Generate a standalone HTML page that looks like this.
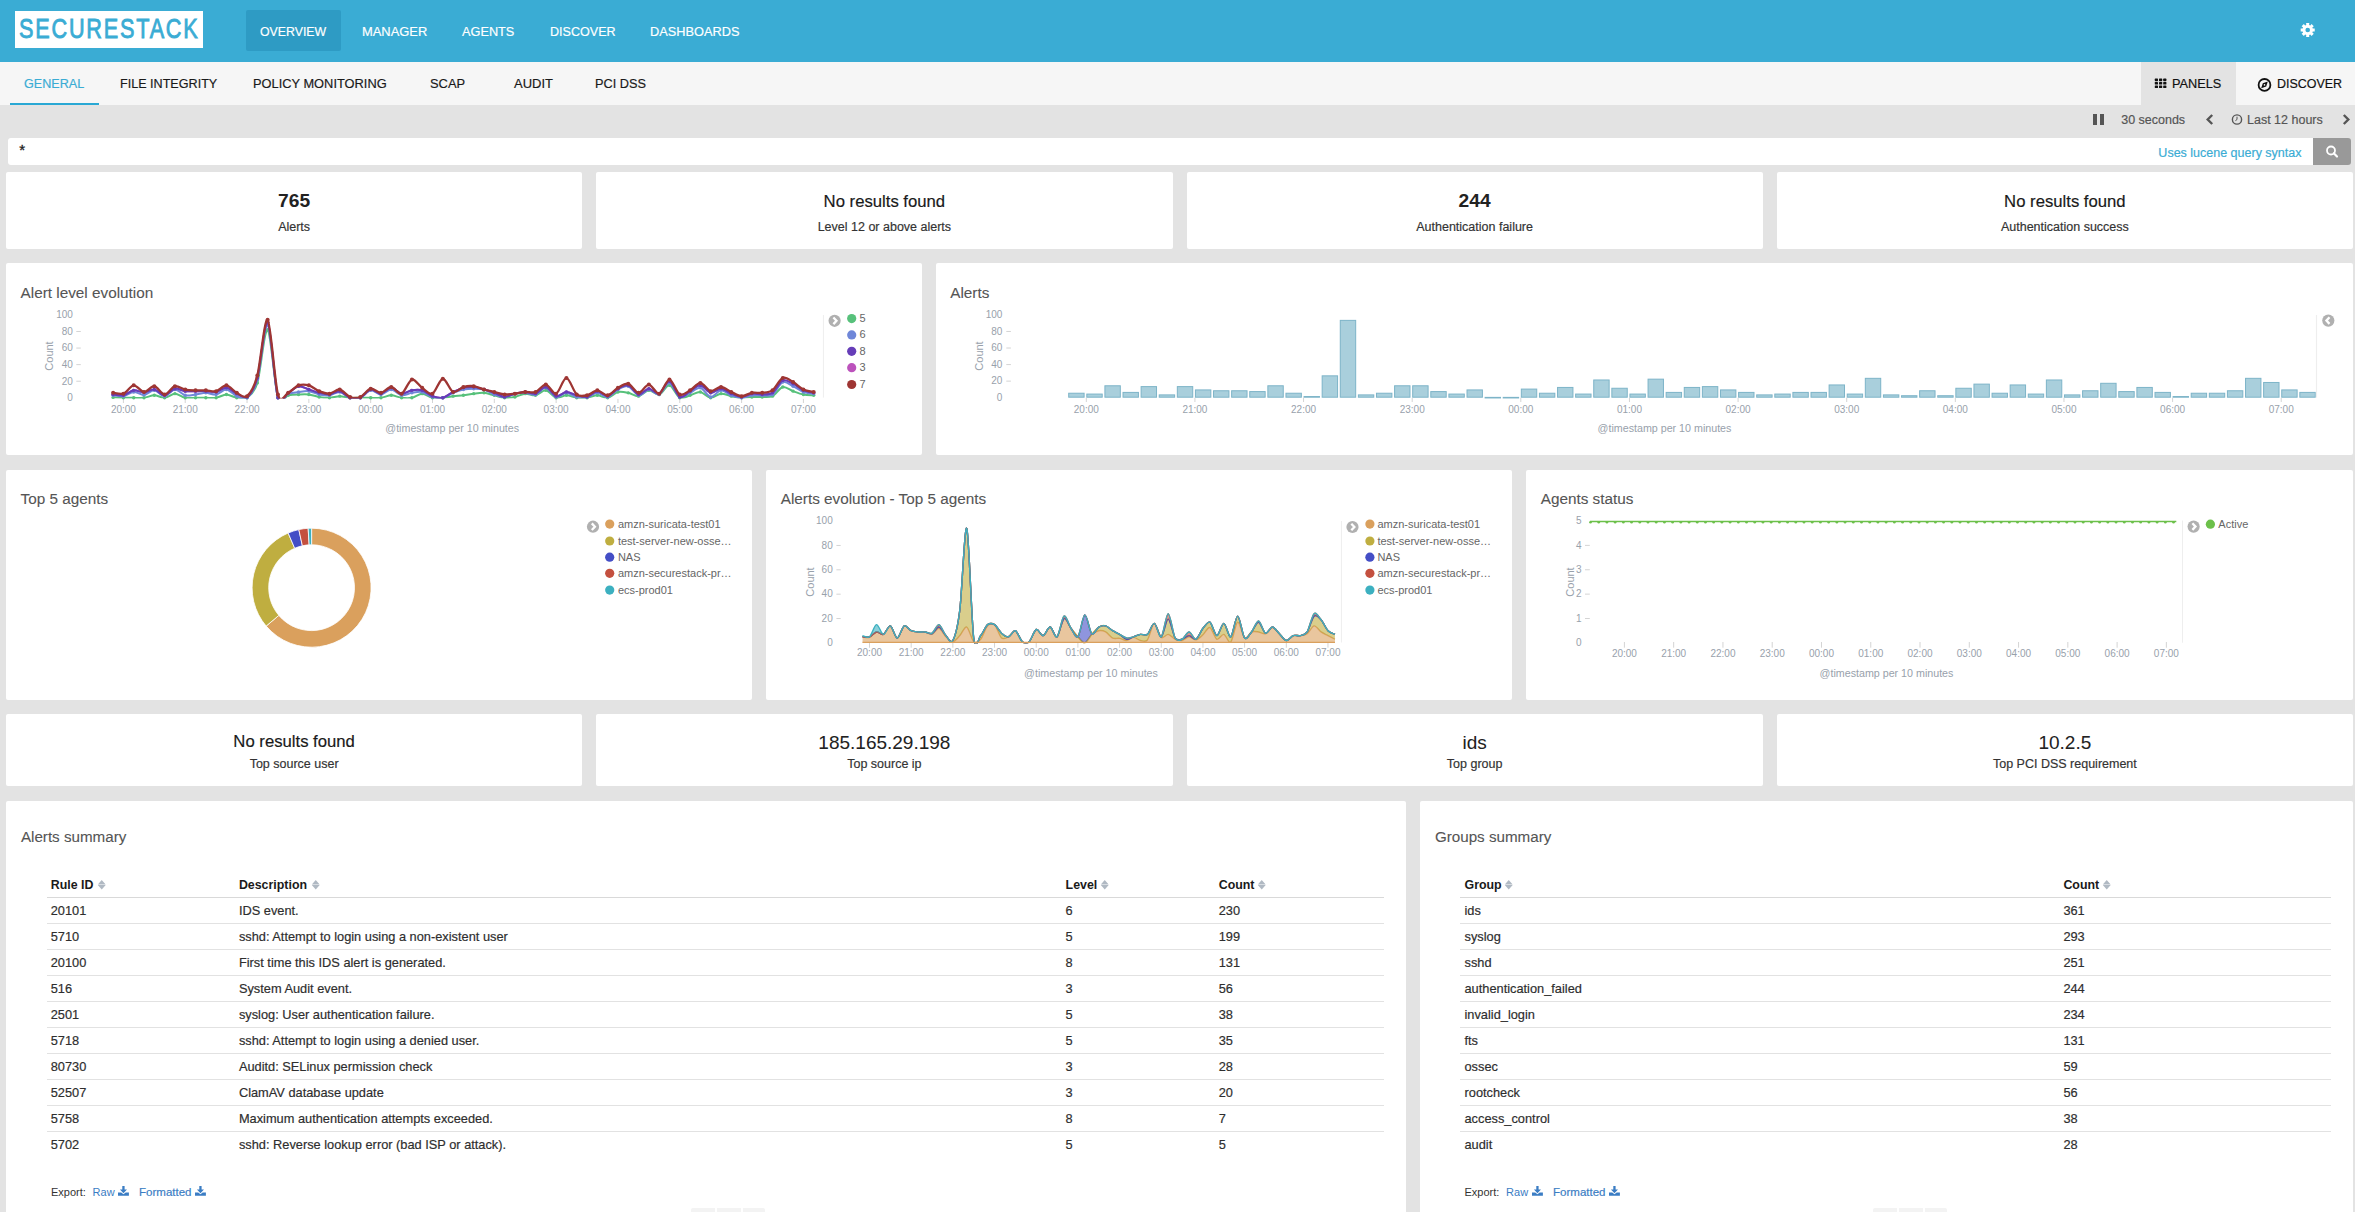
<!DOCTYPE html>
<html><head><meta charset="utf-8"><title>Overview</title><style>
html,body{margin:0;padding:0}
body{width:2355px;height:1212px;overflow:hidden;background:#e3e3e3;position:relative;font-family:"Liberation Sans",sans-serif}
.t{position:absolute;white-space:nowrap;line-height:1;-webkit-text-stroke:0.18px currentColor}
.r{position:absolute}
svg.r{overflow:visible}
</style></head>
<body>
<div class="r" style="left:0.00px;top:0.00px;width:2355.00px;height:62.00px;background:#3aacd4;"></div>
<div class="r" style="left:15.00px;top:11.00px;width:188.00px;height:37.00px;background:#fff;"></div>
<div class="t" style="left:19px;top:14.1px;font-size:28.5px;color:#3aacd4;transform-origin:0 0;transform:scaleX(0.76);letter-spacing:2.35px;-webkit-text-stroke:0.9px #3aacd4">SECURESTACK</div>
<div class="r" style="left:246.00px;top:10.00px;width:95.00px;height:41.00px;background:#2e9bc4;border-radius:2px"></div>
<div class="t" style="left:260.08px;top:25.25px;font-size:13px;color:#fff;transform-origin:0 0;transform:scaleX(0.9480)">OVERVIEW</div>
<div class="t" style="left:361.85px;top:25.25px;font-size:13px;color:#fff;transform-origin:0 0;transform:scaleX(0.9928)">MANAGER</div>
<div class="t" style="left:461.96px;top:25.25px;font-size:13px;color:#fff;transform-origin:0 0;transform:scaleX(0.9790)">AGENTS</div>
<div class="t" style="left:549.57px;top:25.25px;font-size:13px;color:#fff;transform-origin:0 0;transform:scaleX(0.9665)">DISCOVER</div>
<div class="t" style="left:650.46px;top:25.25px;font-size:13px;color:#fff;transform-origin:0 0;transform:scaleX(0.9826)">DASHBOARDS</div>
<svg class="r" style="left:0;top:0" width="2355" height="62"><path d="M2306.26,24.90 L2306.13,22.97 L2309.27,22.97 L2309.14,24.90 L2310.29,25.38 L2311.56,23.92 L2313.78,26.14 L2312.32,27.41 L2312.80,28.56 L2314.73,28.43 L2314.73,31.57 L2312.80,31.44 L2312.32,32.59 L2313.78,33.86 L2311.56,36.08 L2310.29,34.62 L2309.14,35.10 L2309.27,37.03 L2306.13,37.03 L2306.26,35.10 L2305.11,34.62 L2303.84,36.08 L2301.62,33.86 L2303.08,32.59 L2302.60,31.44 L2300.67,31.57 L2300.67,28.43 L2302.60,28.56 L2303.08,27.41 L2301.62,26.14 L2303.84,23.92 L2305.11,25.38Z" fill="#fff"/><circle cx="2307.7" cy="30" r="2.3" fill="#3aacd4"/></svg>
<div class="r" style="left:0.00px;top:62.00px;width:2355.00px;height:43.00px;background:#f6f6f6;"></div>
<div class="r" style="left:10.00px;top:102.50px;width:89.00px;height:2.50px;background:#29a8d4;"></div>
<div class="t" style="left:24.17px;top:77.35px;font-size:13px;color:#3aacd4;transform-origin:0 0;transform:scaleX(0.9677)">GENERAL</div>
<div class="t" style="left:119.67px;top:77.35px;font-size:13px;color:#1a1a1a;transform-origin:0 0;transform:scaleX(0.9684)">FILE INTEGRITY</div>
<div class="t" style="left:252.76px;top:77.35px;font-size:13px;color:#1a1a1a;transform-origin:0 0;transform:scaleX(0.9876)">POLICY MONITORING</div>
<div class="t" style="left:429.86px;top:77.35px;font-size:13px;color:#1a1a1a;transform-origin:0 0;transform:scaleX(0.9902)">SCAP</div>
<div class="t" style="left:514.05px;top:77.35px;font-size:13px;color:#1a1a1a;transform-origin:0 0;transform:scaleX(0.9992)">AUDIT</div>
<div class="t" style="left:594.76px;top:77.35px;font-size:13px;color:#1a1a1a;transform-origin:0 0;transform:scaleX(0.9794)">PCI DSS</div>
<div class="r" style="left:2141.00px;top:62.00px;width:95.00px;height:43.00px;background:#e3e3e3;"></div>
<svg class="r" style="left:0;top:0" width="2355" height="110"><rect x="2154.80" y="78.60" width="3.2" height="2.6" rx="0.6" fill="#111"/><rect x="2159.00" y="78.60" width="3.2" height="2.6" rx="0.6" fill="#111"/><rect x="2163.20" y="78.60" width="3.2" height="2.6" rx="0.6" fill="#111"/><rect x="2154.80" y="82.00" width="3.2" height="2.6" rx="0.6" fill="#111"/><rect x="2159.00" y="82.00" width="3.2" height="2.6" rx="0.6" fill="#111"/><rect x="2163.20" y="82.00" width="3.2" height="2.6" rx="0.6" fill="#111"/><rect x="2154.80" y="85.40" width="3.2" height="2.6" rx="0.6" fill="#111"/><rect x="2159.00" y="85.40" width="3.2" height="2.6" rx="0.6" fill="#111"/><rect x="2163.20" y="85.40" width="3.2" height="2.6" rx="0.6" fill="#111"/></svg>
<div class="t" style="left:2172.16px;top:77.15px;font-size:13px;color:#111;transform-origin:0 0;transform:scaleX(0.9802)">PANELS</div>
<svg class="r" style="left:0;top:0" width="2355" height="110"><circle cx="2264.5" cy="84.9" r="5.9" fill="none" stroke="#111" stroke-width="1.8"/><path d="M2267.8,81.60000000000001 L2266.2,86.60000000000001 L2261.2,88.2 L2262.8,83.2Z" fill="#111"/><circle cx="2264.5" cy="84.9" r="0.8" fill="#f6f6f6"/></svg>
<div class="t" style="left:2276.98px;top:77.15px;font-size:13px;color:#111;transform-origin:0 0;transform:scaleX(0.9590)">DISCOVER</div>
<div class="r" style="left:2092.80px;top:114.10px;width:4.30px;height:10.80px;background:#555;"></div>
<div class="r" style="left:2099.60px;top:114.10px;width:4.30px;height:10.80px;background:#555;"></div>
<div class="t" style="left:2121.20px;top:114.08px;font-size:12.5px;color:#555;">30 seconds</div>
<svg class="r" style="left:0;top:0" width="2355" height="140"><path d="M2212.2,115.0 L2207.7,119.5 L2212.2,124.0" fill="none" stroke="#555" stroke-width="2.4"/></svg>
<svg class="r" style="left:0;top:0" width="2355" height="140"><circle cx="2237" cy="119.5" r="4.6" fill="none" stroke="#555" stroke-width="1.4"/><path d="M2237,116.7 L2237,119.5 L2235.4,120.7" fill="none" stroke="#555" stroke-width="1"/></svg>
<div class="t" style="left:2247.00px;top:114.08px;font-size:12.5px;color:#555;">Last 12 hours</div>
<svg class="r" style="left:0;top:0" width="2355" height="140"><path d="M2343.8,115.0 L2348.3,119.5 L2343.8,124.0" fill="none" stroke="#555" stroke-width="2.4"/></svg>
<div class="r" style="left:8.00px;top:138.00px;width:2305.00px;height:27.00px;background:#fff;border-radius:3px 0 0 3px"></div>
<div class="t" style="left:19.30px;top:142.25px;font-size:15px;color:#222;-webkit-text-stroke:0.3px #222">*</div>
<div class="t" style="right:53.50px;top:146.57px;font-size:12.5px;color:#3aacd4;">Uses lucene query syntax</div>
<div class="r" style="left:2313.00px;top:138.00px;width:38.00px;height:27.00px;background:#999;border-radius:0 3px 3px 0"></div>
<svg class="r" style="left:0;top:0" width="2355" height="170"><circle cx="2331" cy="150.5" r="4" fill="none" stroke="#fff" stroke-width="1.8"/><path d="M2333.8,153.3 L2337,156.5" stroke="#fff" stroke-width="2.2" stroke-linecap="round"/></svg>
<div class="r" style="left:6.00px;top:172.00px;width:576.25px;height:77.00px;background:#fff;border-radius:2px"></div>
<div class="r" style="left:596.25px;top:172.00px;width:576.25px;height:77.00px;background:#fff;border-radius:2px"></div>
<div class="r" style="left:1186.50px;top:172.00px;width:576.25px;height:77.00px;background:#fff;border-radius:2px"></div>
<div class="r" style="left:1776.75px;top:172.00px;width:576.25px;height:77.00px;background:#fff;border-radius:2px"></div>
<div class="r" style="left:6.00px;top:263.00px;width:916.00px;height:192.00px;background:#fff;border-radius:2px"></div>
<div class="r" style="left:936.00px;top:263.00px;width:1417.00px;height:192.00px;background:#fff;border-radius:2px"></div>
<div class="r" style="left:6.00px;top:470.00px;width:746.00px;height:230.00px;background:#fff;border-radius:2px"></div>
<div class="r" style="left:766.00px;top:470.00px;width:746.00px;height:230.00px;background:#fff;border-radius:2px"></div>
<div class="r" style="left:1526.00px;top:470.00px;width:827.00px;height:230.00px;background:#fff;border-radius:2px"></div>
<div class="r" style="left:6.00px;top:714.00px;width:576.25px;height:72.00px;background:#fff;border-radius:2px"></div>
<div class="r" style="left:596.25px;top:714.00px;width:576.25px;height:72.00px;background:#fff;border-radius:2px"></div>
<div class="r" style="left:1186.50px;top:714.00px;width:576.25px;height:72.00px;background:#fff;border-radius:2px"></div>
<div class="r" style="left:1776.75px;top:714.00px;width:576.25px;height:72.00px;background:#fff;border-radius:2px"></div>
<div class="r" style="left:6.00px;top:801.00px;width:1400.00px;height:499.00px;background:#fff;border-radius:2px"></div>
<div class="r" style="left:1420.00px;top:801.00px;width:933.00px;height:499.00px;background:#fff;border-radius:2px"></div>
<div class="t" style="left:294.12px;transform:translateX(-50%);top:190.78px;font-size:19.2px;color:#222;font-weight:700;-webkit-text-stroke:0;">765</div>
<div class="t" style="left:294.12px;transform:translateX(-50%);top:221.07px;font-size:12.5px;color:#333;">Alerts</div>
<div class="t" style="left:884.38px;transform:translateX(-50%);top:193.91px;font-size:16.7px;color:#1a1a1a;">No results found</div>
<div class="t" style="left:884.38px;transform:translateX(-50%);top:221.07px;font-size:12.5px;color:#333;">Level 12 or above alerts</div>
<div class="t" style="left:1474.62px;transform:translateX(-50%);top:190.78px;font-size:19.2px;color:#222;font-weight:700;-webkit-text-stroke:0;">244</div>
<div class="t" style="left:1474.62px;transform:translateX(-50%);top:221.07px;font-size:12.5px;color:#333;">Authentication failure</div>
<div class="t" style="left:2064.88px;transform:translateX(-50%);top:193.91px;font-size:16.7px;color:#1a1a1a;">No results found</div>
<div class="t" style="left:2064.88px;transform:translateX(-50%);top:221.07px;font-size:12.5px;color:#333;">Authentication success</div>
<div class="t" style="left:294.12px;transform:translateX(-50%);top:733.80px;font-size:16.7px;color:#1a1a1a;">No results found</div>
<div class="t" style="left:294.12px;transform:translateX(-50%);top:758.08px;font-size:12.5px;color:#333;">Top source user</div>
<div class="t" style="left:884.38px;transform:translateX(-50%);top:732.85px;font-size:19px;color:#222;-webkit-text-stroke:0.05px currentColor">185.165.29.198</div>
<div class="t" style="left:884.38px;transform:translateX(-50%);top:758.08px;font-size:12.5px;color:#333;">Top source ip</div>
<div class="t" style="left:1474.62px;transform:translateX(-50%);top:732.85px;font-size:19px;color:#222;-webkit-text-stroke:0.05px currentColor">ids</div>
<div class="t" style="left:1474.62px;transform:translateX(-50%);top:758.08px;font-size:12.5px;color:#333;">Top group</div>
<div class="t" style="left:2064.88px;transform:translateX(-50%);top:732.85px;font-size:19px;color:#222;-webkit-text-stroke:0.05px currentColor">10.2.5</div>
<div class="t" style="left:2064.88px;transform:translateX(-50%);top:758.08px;font-size:12.5px;color:#333;">Top PCI DSS requirement</div>
<svg class="r" style="left:0;top:0" width="2355" height="1212"><line x1="76.3" y1="381.22" x2="80.8" y2="381.22" stroke="#d4d4d4" stroke-width="1"/><line x1="76.3" y1="364.64" x2="80.8" y2="364.64" stroke="#d4d4d4" stroke-width="1"/><line x1="76.3" y1="348.06" x2="80.8" y2="348.06" stroke="#d4d4d4" stroke-width="1"/><line x1="76.3" y1="331.48" x2="80.8" y2="331.48" stroke="#d4d4d4" stroke-width="1"/><line x1="123.40" y1="398.9" x2="123.40" y2="403" stroke="#d4d4d4" stroke-width="1"/><line x1="185.22" y1="398.9" x2="185.22" y2="403" stroke="#d4d4d4" stroke-width="1"/><line x1="247.04" y1="398.9" x2="247.04" y2="403" stroke="#d4d4d4" stroke-width="1"/><line x1="308.86" y1="398.9" x2="308.86" y2="403" stroke="#d4d4d4" stroke-width="1"/><line x1="370.68" y1="398.9" x2="370.68" y2="403" stroke="#d4d4d4" stroke-width="1"/><line x1="432.50" y1="398.9" x2="432.50" y2="403" stroke="#d4d4d4" stroke-width="1"/><line x1="494.32" y1="398.9" x2="494.32" y2="403" stroke="#d4d4d4" stroke-width="1"/><line x1="556.14" y1="398.9" x2="556.14" y2="403" stroke="#d4d4d4" stroke-width="1"/><line x1="617.96" y1="398.9" x2="617.96" y2="403" stroke="#d4d4d4" stroke-width="1"/><line x1="679.78" y1="398.9" x2="679.78" y2="403" stroke="#d4d4d4" stroke-width="1"/><line x1="741.60" y1="398.9" x2="741.60" y2="403" stroke="#d4d4d4" stroke-width="1"/><line x1="803.42" y1="398.9" x2="803.42" y2="403" stroke="#d4d4d4" stroke-width="1"/><line x1="823.4" y1="315" x2="823.4" y2="397.6" stroke="#eee" stroke-width="1"/><circle cx="834.6" cy="320.8" r="6.1" fill="#b0b0b0"/><path d="M833.4,317.5 L836.5,320.8 L833.4,324.1" fill="none" stroke="#fff" stroke-width="2.3"/><circle cx="851.7" cy="318.60" r="4.6" fill="#57c17b"/><circle cx="851.7" cy="334.90" r="4.6" fill="#6f87d8"/><circle cx="851.7" cy="351.30" r="4.6" fill="#663db8"/><circle cx="851.7" cy="367.70" r="4.6" fill="#bc52bc"/><circle cx="851.7" cy="384.50" r="4.6" fill="#9e3533"/><defs><clipPath id="clip1"><rect x="100" y="300" width="720" height="98.6"/></clipPath></defs><path d="M113.10,394.48 C114.65,394.61 120.31,395.93 123.40,395.31 C126.49,394.69 130.62,390.77 133.71,390.34 C136.80,389.90 140.92,392.54 144.01,392.41 C147.10,392.29 151.22,389.07 154.31,389.51 C157.40,389.95 161.52,395.44 164.62,395.31 C167.71,395.19 171.83,389.30 174.92,388.68 C178.01,388.06 182.13,390.79 185.22,391.17 C188.31,391.54 192.43,391.17 195.52,391.17 C198.61,391.17 202.74,391.04 205.83,391.17 C208.92,391.29 213.04,392.49 216.13,392.00 C219.22,391.50 223.34,387.60 226.43,387.85 C229.52,388.10 233.65,392.29 236.74,393.66 C239.83,395.02 243.95,399.33 247.04,396.97 C250.13,394.61 254.25,389.10 257.34,377.90 C260.43,366.71 264.55,319.38 267.64,322.36 C270.74,325.35 274.86,387.23 277.95,397.80 C281.04,408.37 285.16,394.57 288.25,392.83 C291.34,391.09 295.46,386.69 298.55,386.19 C301.64,385.70 305.77,388.52 308.86,389.51 C311.95,390.50 316.07,392.08 319.16,392.83 C322.25,393.57 326.37,394.73 329.46,394.48 C332.55,394.24 336.68,390.67 339.77,391.17 C342.86,391.67 346.98,396.81 350.07,397.80 C353.16,398.79 357.28,399.04 360.37,397.80 C363.46,396.56 367.58,390.13 370.68,389.51 C373.77,388.89 377.89,393.90 380.98,393.66 C384.07,393.41 388.19,387.85 391.28,387.85 C394.37,387.85 398.49,393.28 401.58,393.66 C404.67,394.03 408.80,390.84 411.89,390.34 C414.98,389.84 419.10,389.47 422.19,390.34 C425.28,391.21 429.40,395.02 432.49,396.14 C435.58,397.26 439.71,398.42 442.80,397.80 C445.89,397.18 450.01,393.49 453.10,392.00 C456.19,390.50 460.31,388.60 463.40,387.85 C466.49,387.11 470.61,386.77 473.71,387.02 C476.80,387.27 480.92,388.64 484.01,389.51 C487.10,390.38 491.22,391.71 494.31,392.83 C497.40,393.95 501.52,396.85 504.61,396.97 C507.70,397.10 511.83,394.40 514.92,393.66 C518.01,392.91 522.13,392.00 525.22,392.00 C528.31,392.00 532.43,394.40 535.52,393.66 C538.61,392.91 542.74,386.65 545.83,387.02 C548.92,387.40 553.04,395.40 556.13,396.14 C559.22,396.89 563.34,392.12 566.43,392.00 C569.52,391.87 573.64,394.57 576.74,395.31 C579.83,396.06 583.95,397.59 587.04,396.97 C590.13,396.35 594.25,391.29 597.34,391.17 C600.43,391.04 604.55,396.52 607.64,396.14 C610.73,395.77 614.86,390.30 617.95,388.68 C621.04,387.06 625.16,384.49 628.25,385.37 C631.34,386.24 635.46,393.99 638.55,394.48 C641.64,394.98 645.77,388.81 648.86,388.68 C651.95,388.56 656.07,394.77 659.16,393.66 C662.25,392.54 666.37,380.72 669.46,381.22 C672.55,381.72 676.67,395.48 679.77,396.97 C682.86,398.46 686.98,392.91 690.07,391.17 C693.16,389.43 697.28,385.12 700.37,385.37 C703.46,385.61 707.58,392.33 710.67,392.83 C713.76,393.32 717.89,388.56 720.98,388.68 C724.07,388.81 728.19,392.41 731.28,393.66 C734.37,394.90 738.49,396.97 741.58,396.97 C744.67,396.97 748.80,394.03 751.89,393.66 C754.98,393.28 759.10,394.61 762.19,394.48 C765.28,394.36 769.40,394.94 772.49,392.83 C775.58,390.71 779.70,381.76 782.80,380.39 C785.89,379.02 790.01,382.21 793.10,383.71 C796.19,385.20 800.31,388.97 803.40,390.34 C806.49,391.71 812.16,392.45 813.70,392.83" fill="none" stroke="#bc52bc" stroke-width="2.0" stroke-linejoin="round" clip-path="url(#clip1)"/><circle cx="113.10" cy="394.48" r="1.7" fill="#bc52bc"/><circle cx="123.40" cy="395.31" r="1.7" fill="#bc52bc"/><circle cx="133.71" cy="390.34" r="1.7" fill="#bc52bc"/><circle cx="144.01" cy="392.41" r="1.7" fill="#bc52bc"/><circle cx="154.31" cy="389.51" r="1.7" fill="#bc52bc"/><circle cx="164.62" cy="395.31" r="1.7" fill="#bc52bc"/><circle cx="174.92" cy="388.68" r="1.7" fill="#bc52bc"/><circle cx="185.22" cy="391.17" r="1.7" fill="#bc52bc"/><circle cx="195.52" cy="391.17" r="1.7" fill="#bc52bc"/><circle cx="205.83" cy="391.17" r="1.7" fill="#bc52bc"/><circle cx="216.13" cy="392.00" r="1.7" fill="#bc52bc"/><circle cx="226.43" cy="387.85" r="1.7" fill="#bc52bc"/><circle cx="236.74" cy="393.66" r="1.7" fill="#bc52bc"/><circle cx="247.04" cy="396.97" r="1.7" fill="#bc52bc"/><circle cx="257.34" cy="377.90" r="1.7" fill="#bc52bc"/><circle cx="267.64" cy="322.36" r="1.7" fill="#bc52bc"/><circle cx="277.95" cy="397.80" r="1.7" fill="#bc52bc"/><circle cx="288.25" cy="392.83" r="1.7" fill="#bc52bc"/><circle cx="298.55" cy="386.19" r="1.7" fill="#bc52bc"/><circle cx="308.86" cy="389.51" r="1.7" fill="#bc52bc"/><circle cx="319.16" cy="392.83" r="1.7" fill="#bc52bc"/><circle cx="329.46" cy="394.48" r="1.7" fill="#bc52bc"/><circle cx="339.77" cy="391.17" r="1.7" fill="#bc52bc"/><circle cx="350.07" cy="397.80" r="1.7" fill="#bc52bc"/><circle cx="360.37" cy="397.80" r="1.7" fill="#bc52bc"/><circle cx="370.68" cy="389.51" r="1.7" fill="#bc52bc"/><circle cx="380.98" cy="393.66" r="1.7" fill="#bc52bc"/><circle cx="391.28" cy="387.85" r="1.7" fill="#bc52bc"/><circle cx="401.58" cy="393.66" r="1.7" fill="#bc52bc"/><circle cx="411.89" cy="390.34" r="1.7" fill="#bc52bc"/><circle cx="422.19" cy="390.34" r="1.7" fill="#bc52bc"/><circle cx="432.49" cy="396.14" r="1.7" fill="#bc52bc"/><circle cx="442.80" cy="397.80" r="1.7" fill="#bc52bc"/><circle cx="453.10" cy="392.00" r="1.7" fill="#bc52bc"/><circle cx="463.40" cy="387.85" r="1.7" fill="#bc52bc"/><circle cx="473.71" cy="387.02" r="1.7" fill="#bc52bc"/><circle cx="484.01" cy="389.51" r="1.7" fill="#bc52bc"/><circle cx="494.31" cy="392.83" r="1.7" fill="#bc52bc"/><circle cx="504.61" cy="396.97" r="1.7" fill="#bc52bc"/><circle cx="514.92" cy="393.66" r="1.7" fill="#bc52bc"/><circle cx="525.22" cy="392.00" r="1.7" fill="#bc52bc"/><circle cx="535.52" cy="393.66" r="1.7" fill="#bc52bc"/><circle cx="545.83" cy="387.02" r="1.7" fill="#bc52bc"/><circle cx="556.13" cy="396.14" r="1.7" fill="#bc52bc"/><circle cx="566.43" cy="392.00" r="1.7" fill="#bc52bc"/><circle cx="576.74" cy="395.31" r="1.7" fill="#bc52bc"/><circle cx="587.04" cy="396.97" r="1.7" fill="#bc52bc"/><circle cx="597.34" cy="391.17" r="1.7" fill="#bc52bc"/><circle cx="607.64" cy="396.14" r="1.7" fill="#bc52bc"/><circle cx="617.95" cy="388.68" r="1.7" fill="#bc52bc"/><circle cx="628.25" cy="385.37" r="1.7" fill="#bc52bc"/><circle cx="638.55" cy="394.48" r="1.7" fill="#bc52bc"/><circle cx="648.86" cy="388.68" r="1.7" fill="#bc52bc"/><circle cx="659.16" cy="393.66" r="1.7" fill="#bc52bc"/><circle cx="669.46" cy="381.22" r="1.7" fill="#bc52bc"/><circle cx="679.77" cy="396.97" r="1.7" fill="#bc52bc"/><circle cx="690.07" cy="391.17" r="1.7" fill="#bc52bc"/><circle cx="700.37" cy="385.37" r="1.7" fill="#bc52bc"/><circle cx="710.67" cy="392.83" r="1.7" fill="#bc52bc"/><circle cx="720.98" cy="388.68" r="1.7" fill="#bc52bc"/><circle cx="731.28" cy="393.66" r="1.7" fill="#bc52bc"/><circle cx="741.58" cy="396.97" r="1.7" fill="#bc52bc"/><circle cx="751.89" cy="393.66" r="1.7" fill="#bc52bc"/><circle cx="762.19" cy="394.48" r="1.7" fill="#bc52bc"/><circle cx="772.49" cy="392.83" r="1.7" fill="#bc52bc"/><circle cx="782.80" cy="380.39" r="1.7" fill="#bc52bc"/><circle cx="793.10" cy="383.71" r="1.7" fill="#bc52bc"/><circle cx="803.40" cy="390.34" r="1.7" fill="#bc52bc"/><circle cx="813.70" cy="392.83" r="1.7" fill="#bc52bc"/><path d="M113.10,397.39 C114.65,397.45 120.31,397.74 123.40,397.80 C126.49,397.86 130.62,397.80 133.71,397.80 C136.80,397.80 140.92,398.17 144.01,397.80 C147.10,397.43 151.22,395.31 154.31,395.31 C157.40,395.31 161.52,398.05 164.62,397.80 C167.71,397.55 171.83,393.66 174.92,393.66 C178.01,393.66 182.13,397.18 185.22,397.80 C188.31,398.42 192.43,397.80 195.52,397.80 C198.61,397.80 202.74,397.80 205.83,397.80 C208.92,397.80 213.04,398.30 216.13,397.80 C219.22,397.30 223.34,394.48 226.43,394.48 C229.52,394.48 233.65,397.30 236.74,397.80 C239.83,398.30 243.95,400.04 247.04,397.80 C250.13,395.56 254.25,393.07 257.34,382.88 C260.43,372.68 264.55,327.58 267.64,329.82 C270.74,332.06 274.86,387.98 277.95,397.80 C281.04,407.62 285.16,395.81 288.25,395.31 C291.34,394.82 295.46,394.61 298.55,394.48 C301.64,394.36 305.77,394.11 308.86,394.48 C311.95,394.86 316.07,396.47 319.16,396.97 C322.25,397.47 326.37,397.92 329.46,397.80 C332.55,397.68 336.68,396.14 339.77,396.14 C342.86,396.14 346.98,397.55 350.07,397.80 C353.16,398.05 357.28,397.80 360.37,397.80 C363.46,397.80 367.58,397.80 370.68,397.80 C373.77,397.80 377.89,398.17 380.98,397.80 C384.07,397.43 388.19,395.31 391.28,395.31 C394.37,395.31 398.49,397.43 401.58,397.80 C404.67,398.17 408.80,398.42 411.89,397.80 C414.98,397.18 419.10,393.66 422.19,393.66 C425.28,393.66 429.40,397.18 432.49,397.80 C435.58,398.42 439.71,398.05 442.80,397.80 C445.89,397.55 450.01,396.52 453.10,396.14 C456.19,395.77 460.31,395.69 463.40,395.31 C466.49,394.94 470.61,394.03 473.71,393.66 C476.80,393.28 480.92,392.58 484.01,392.83 C487.10,393.07 491.22,394.57 494.31,395.31 C497.40,396.06 501.52,397.55 504.61,397.80 C507.70,398.05 511.83,397.59 514.92,396.97 C518.01,396.35 522.13,393.90 525.22,393.66 C528.31,393.41 532.43,395.81 535.52,395.31 C538.61,394.82 542.74,389.97 545.83,390.34 C548.92,390.71 553.04,397.05 556.13,397.80 C559.22,398.55 563.34,395.31 566.43,395.31 C569.52,395.31 573.64,397.43 576.74,397.80 C579.83,398.17 583.95,398.17 587.04,397.80 C590.13,397.43 594.25,395.31 597.34,395.31 C600.43,395.31 604.55,398.30 607.64,397.80 C610.73,397.30 614.86,392.74 617.95,392.00 C621.04,391.25 625.16,392.20 628.25,392.83 C631.34,393.45 635.46,396.52 638.55,396.14 C641.64,395.77 645.77,390.59 648.86,390.34 C651.95,390.09 656.07,395.23 659.16,394.48 C662.25,393.74 666.37,384.87 669.46,385.37 C672.55,385.86 676.67,396.31 679.77,397.80 C682.86,399.29 686.98,396.18 690.07,395.31 C693.16,394.44 697.28,391.62 700.37,392.00 C703.46,392.37 707.58,397.55 710.67,397.80 C713.76,398.05 717.89,393.90 720.98,393.66 C724.07,393.41 728.19,395.52 731.28,396.14 C734.37,396.76 738.49,397.68 741.58,397.80 C744.67,397.92 748.80,397.10 751.89,396.97 C754.98,396.85 759.10,397.10 762.19,396.97 C765.28,396.85 769.40,397.63 772.49,396.14 C775.58,394.65 779.70,387.77 782.80,387.02 C785.89,386.28 790.01,390.05 793.10,391.17 C796.19,392.29 800.31,393.86 803.40,394.48 C806.49,395.11 812.16,395.19 813.70,395.31" fill="none" stroke="#57c17b" stroke-width="2.0" stroke-linejoin="round" clip-path="url(#clip1)"/><circle cx="113.10" cy="397.39" r="1.7" fill="#57c17b"/><circle cx="123.40" cy="397.80" r="1.7" fill="#57c17b"/><circle cx="133.71" cy="397.80" r="1.7" fill="#57c17b"/><circle cx="144.01" cy="397.80" r="1.7" fill="#57c17b"/><circle cx="154.31" cy="395.31" r="1.7" fill="#57c17b"/><circle cx="164.62" cy="397.80" r="1.7" fill="#57c17b"/><circle cx="174.92" cy="393.66" r="1.7" fill="#57c17b"/><circle cx="185.22" cy="397.80" r="1.7" fill="#57c17b"/><circle cx="195.52" cy="397.80" r="1.7" fill="#57c17b"/><circle cx="205.83" cy="397.80" r="1.7" fill="#57c17b"/><circle cx="216.13" cy="397.80" r="1.7" fill="#57c17b"/><circle cx="226.43" cy="394.48" r="1.7" fill="#57c17b"/><circle cx="236.74" cy="397.80" r="1.7" fill="#57c17b"/><circle cx="247.04" cy="397.80" r="1.7" fill="#57c17b"/><circle cx="257.34" cy="382.88" r="1.7" fill="#57c17b"/><circle cx="267.64" cy="329.82" r="1.7" fill="#57c17b"/><circle cx="277.95" cy="397.80" r="1.7" fill="#57c17b"/><circle cx="288.25" cy="395.31" r="1.7" fill="#57c17b"/><circle cx="298.55" cy="394.48" r="1.7" fill="#57c17b"/><circle cx="308.86" cy="394.48" r="1.7" fill="#57c17b"/><circle cx="319.16" cy="396.97" r="1.7" fill="#57c17b"/><circle cx="329.46" cy="397.80" r="1.7" fill="#57c17b"/><circle cx="339.77" cy="396.14" r="1.7" fill="#57c17b"/><circle cx="350.07" cy="397.80" r="1.7" fill="#57c17b"/><circle cx="360.37" cy="397.80" r="1.7" fill="#57c17b"/><circle cx="370.68" cy="397.80" r="1.7" fill="#57c17b"/><circle cx="380.98" cy="397.80" r="1.7" fill="#57c17b"/><circle cx="391.28" cy="395.31" r="1.7" fill="#57c17b"/><circle cx="401.58" cy="397.80" r="1.7" fill="#57c17b"/><circle cx="411.89" cy="397.80" r="1.7" fill="#57c17b"/><circle cx="422.19" cy="393.66" r="1.7" fill="#57c17b"/><circle cx="432.49" cy="397.80" r="1.7" fill="#57c17b"/><circle cx="442.80" cy="397.80" r="1.7" fill="#57c17b"/><circle cx="453.10" cy="396.14" r="1.7" fill="#57c17b"/><circle cx="463.40" cy="395.31" r="1.7" fill="#57c17b"/><circle cx="473.71" cy="393.66" r="1.7" fill="#57c17b"/><circle cx="484.01" cy="392.83" r="1.7" fill="#57c17b"/><circle cx="494.31" cy="395.31" r="1.7" fill="#57c17b"/><circle cx="504.61" cy="397.80" r="1.7" fill="#57c17b"/><circle cx="514.92" cy="396.97" r="1.7" fill="#57c17b"/><circle cx="525.22" cy="393.66" r="1.7" fill="#57c17b"/><circle cx="535.52" cy="395.31" r="1.7" fill="#57c17b"/><circle cx="545.83" cy="390.34" r="1.7" fill="#57c17b"/><circle cx="556.13" cy="397.80" r="1.7" fill="#57c17b"/><circle cx="566.43" cy="395.31" r="1.7" fill="#57c17b"/><circle cx="576.74" cy="397.80" r="1.7" fill="#57c17b"/><circle cx="587.04" cy="397.80" r="1.7" fill="#57c17b"/><circle cx="597.34" cy="395.31" r="1.7" fill="#57c17b"/><circle cx="607.64" cy="397.80" r="1.7" fill="#57c17b"/><circle cx="617.95" cy="392.00" r="1.7" fill="#57c17b"/><circle cx="628.25" cy="392.83" r="1.7" fill="#57c17b"/><circle cx="638.55" cy="396.14" r="1.7" fill="#57c17b"/><circle cx="648.86" cy="390.34" r="1.7" fill="#57c17b"/><circle cx="659.16" cy="394.48" r="1.7" fill="#57c17b"/><circle cx="669.46" cy="385.37" r="1.7" fill="#57c17b"/><circle cx="679.77" cy="397.80" r="1.7" fill="#57c17b"/><circle cx="690.07" cy="395.31" r="1.7" fill="#57c17b"/><circle cx="700.37" cy="392.00" r="1.7" fill="#57c17b"/><circle cx="710.67" cy="397.80" r="1.7" fill="#57c17b"/><circle cx="720.98" cy="393.66" r="1.7" fill="#57c17b"/><circle cx="731.28" cy="396.14" r="1.7" fill="#57c17b"/><circle cx="741.58" cy="397.80" r="1.7" fill="#57c17b"/><circle cx="751.89" cy="396.97" r="1.7" fill="#57c17b"/><circle cx="762.19" cy="396.97" r="1.7" fill="#57c17b"/><circle cx="772.49" cy="396.14" r="1.7" fill="#57c17b"/><circle cx="782.80" cy="387.02" r="1.7" fill="#57c17b"/><circle cx="793.10" cy="391.17" r="1.7" fill="#57c17b"/><circle cx="803.40" cy="394.48" r="1.7" fill="#57c17b"/><circle cx="813.70" cy="395.31" r="1.7" fill="#57c17b"/><path d="M113.10,395.31 C114.65,395.44 120.31,396.64 123.40,396.14 C126.49,395.64 130.62,392.18 133.71,392.00 C136.80,391.81 140.92,395.15 144.01,394.90 C147.10,394.65 151.22,390.15 154.31,390.34 C157.40,390.53 161.52,396.27 164.62,396.14 C167.71,396.02 171.83,389.63 174.92,389.51 C178.01,389.39 182.13,394.57 185.22,395.31 C188.31,396.06 192.43,394.86 195.52,394.48 C198.61,394.11 202.74,392.83 205.83,392.83 C208.92,392.83 213.04,394.98 216.13,394.48 C219.22,393.99 223.34,389.26 226.43,389.51 C229.52,389.76 233.65,394.90 236.74,396.14 C239.83,397.39 243.95,400.29 247.04,397.80 C250.13,395.31 254.25,390.50 257.34,379.56 C260.43,368.62 264.55,322.11 267.64,324.85 C270.74,327.58 274.86,387.48 277.95,397.80 C281.04,408.12 285.16,394.53 288.25,393.66 C291.34,392.78 295.46,392.37 298.55,392.00 C301.64,391.62 305.77,390.79 308.86,391.17 C311.95,391.54 316.07,393.86 319.16,394.48 C322.25,395.11 326.37,395.69 329.46,395.31 C332.55,394.94 336.68,391.62 339.77,392.00 C342.86,392.37 346.98,396.93 350.07,397.80 C353.16,398.67 357.28,398.92 360.37,397.80 C363.46,396.68 367.58,390.84 370.68,390.34 C373.77,389.84 377.89,394.61 380.98,394.48 C384.07,394.36 388.19,389.39 391.28,389.51 C394.37,389.63 398.49,394.82 401.58,395.31 C404.67,395.81 408.80,393.32 411.89,392.83 C414.98,392.33 419.10,391.38 422.19,392.00 C425.28,392.62 429.40,396.10 432.49,396.97 C435.58,397.84 439.71,398.42 442.80,397.80 C445.89,397.18 450.01,394.07 453.10,392.83 C456.19,391.58 460.31,390.13 463.40,389.51 C466.49,388.89 470.61,388.68 473.71,388.68 C476.80,388.68 480.92,388.64 484.01,389.51 C487.10,390.38 491.22,393.36 494.31,394.48 C497.40,395.60 501.52,397.10 504.61,396.97 C507.70,396.85 511.83,394.28 514.92,393.66 C518.01,393.03 522.13,392.70 525.22,392.83 C528.31,392.95 532.43,395.23 535.52,394.48 C538.61,393.74 542.74,387.48 545.83,387.85 C548.92,388.23 553.04,396.22 556.13,396.97 C559.22,397.72 563.34,392.83 566.43,392.83 C569.52,392.83 573.64,396.35 576.74,396.97 C579.83,397.59 583.95,397.59 587.04,396.97 C590.13,396.35 594.25,392.83 597.34,392.83 C600.43,392.83 604.55,397.47 607.64,396.97 C610.73,396.47 614.86,391.13 617.95,389.51 C621.04,387.89 625.16,385.32 628.25,386.19 C631.34,387.06 635.46,394.82 638.55,395.31 C641.64,395.81 645.77,389.63 648.86,389.51 C651.95,389.39 656.07,395.48 659.16,394.48 C662.25,393.49 666.37,382.50 669.46,382.88 C672.55,383.25 676.67,395.48 679.77,396.97 C682.86,398.46 686.98,394.19 690.07,392.83 C693.16,391.46 697.28,387.23 700.37,387.85 C703.46,388.47 707.58,396.60 710.67,396.97 C713.76,397.34 717.89,390.59 720.98,390.34 C724.07,390.09 728.19,394.19 731.28,395.31 C734.37,396.43 738.49,397.80 741.58,397.80 C744.67,397.80 748.80,395.69 751.89,395.31 C754.98,394.94 759.10,395.44 762.19,395.31 C765.28,395.19 769.40,396.47 772.49,394.48 C775.58,392.49 779.70,383.29 782.80,382.05 C785.89,380.81 790.01,384.70 793.10,386.19 C796.19,387.69 800.31,390.88 803.40,392.00 C806.49,393.12 812.16,393.41 813.70,393.66" fill="none" stroke="#6f87d8" stroke-width="2.0" stroke-linejoin="round" clip-path="url(#clip1)"/><circle cx="113.10" cy="395.31" r="1.7" fill="#6f87d8"/><circle cx="123.40" cy="396.14" r="1.7" fill="#6f87d8"/><circle cx="133.71" cy="392.00" r="1.7" fill="#6f87d8"/><circle cx="144.01" cy="394.90" r="1.7" fill="#6f87d8"/><circle cx="154.31" cy="390.34" r="1.7" fill="#6f87d8"/><circle cx="164.62" cy="396.14" r="1.7" fill="#6f87d8"/><circle cx="174.92" cy="389.51" r="1.7" fill="#6f87d8"/><circle cx="185.22" cy="395.31" r="1.7" fill="#6f87d8"/><circle cx="195.52" cy="394.48" r="1.7" fill="#6f87d8"/><circle cx="205.83" cy="392.83" r="1.7" fill="#6f87d8"/><circle cx="216.13" cy="394.48" r="1.7" fill="#6f87d8"/><circle cx="226.43" cy="389.51" r="1.7" fill="#6f87d8"/><circle cx="236.74" cy="396.14" r="1.7" fill="#6f87d8"/><circle cx="247.04" cy="397.80" r="1.7" fill="#6f87d8"/><circle cx="257.34" cy="379.56" r="1.7" fill="#6f87d8"/><circle cx="267.64" cy="324.85" r="1.7" fill="#6f87d8"/><circle cx="277.95" cy="397.80" r="1.7" fill="#6f87d8"/><circle cx="288.25" cy="393.66" r="1.7" fill="#6f87d8"/><circle cx="298.55" cy="392.00" r="1.7" fill="#6f87d8"/><circle cx="308.86" cy="391.17" r="1.7" fill="#6f87d8"/><circle cx="319.16" cy="394.48" r="1.7" fill="#6f87d8"/><circle cx="329.46" cy="395.31" r="1.7" fill="#6f87d8"/><circle cx="339.77" cy="392.00" r="1.7" fill="#6f87d8"/><circle cx="350.07" cy="397.80" r="1.7" fill="#6f87d8"/><circle cx="360.37" cy="397.80" r="1.7" fill="#6f87d8"/><circle cx="370.68" cy="390.34" r="1.7" fill="#6f87d8"/><circle cx="380.98" cy="394.48" r="1.7" fill="#6f87d8"/><circle cx="391.28" cy="389.51" r="1.7" fill="#6f87d8"/><circle cx="401.58" cy="395.31" r="1.7" fill="#6f87d8"/><circle cx="411.89" cy="392.83" r="1.7" fill="#6f87d8"/><circle cx="422.19" cy="392.00" r="1.7" fill="#6f87d8"/><circle cx="432.49" cy="396.97" r="1.7" fill="#6f87d8"/><circle cx="442.80" cy="397.80" r="1.7" fill="#6f87d8"/><circle cx="453.10" cy="392.83" r="1.7" fill="#6f87d8"/><circle cx="463.40" cy="389.51" r="1.7" fill="#6f87d8"/><circle cx="473.71" cy="388.68" r="1.7" fill="#6f87d8"/><circle cx="484.01" cy="389.51" r="1.7" fill="#6f87d8"/><circle cx="494.31" cy="394.48" r="1.7" fill="#6f87d8"/><circle cx="504.61" cy="396.97" r="1.7" fill="#6f87d8"/><circle cx="514.92" cy="393.66" r="1.7" fill="#6f87d8"/><circle cx="525.22" cy="392.83" r="1.7" fill="#6f87d8"/><circle cx="535.52" cy="394.48" r="1.7" fill="#6f87d8"/><circle cx="545.83" cy="387.85" r="1.7" fill="#6f87d8"/><circle cx="556.13" cy="396.97" r="1.7" fill="#6f87d8"/><circle cx="566.43" cy="392.83" r="1.7" fill="#6f87d8"/><circle cx="576.74" cy="396.97" r="1.7" fill="#6f87d8"/><circle cx="587.04" cy="396.97" r="1.7" fill="#6f87d8"/><circle cx="597.34" cy="392.83" r="1.7" fill="#6f87d8"/><circle cx="607.64" cy="396.97" r="1.7" fill="#6f87d8"/><circle cx="617.95" cy="389.51" r="1.7" fill="#6f87d8"/><circle cx="628.25" cy="386.19" r="1.7" fill="#6f87d8"/><circle cx="638.55" cy="395.31" r="1.7" fill="#6f87d8"/><circle cx="648.86" cy="389.51" r="1.7" fill="#6f87d8"/><circle cx="659.16" cy="394.48" r="1.7" fill="#6f87d8"/><circle cx="669.46" cy="382.88" r="1.7" fill="#6f87d8"/><circle cx="679.77" cy="396.97" r="1.7" fill="#6f87d8"/><circle cx="690.07" cy="392.83" r="1.7" fill="#6f87d8"/><circle cx="700.37" cy="387.85" r="1.7" fill="#6f87d8"/><circle cx="710.67" cy="396.97" r="1.7" fill="#6f87d8"/><circle cx="720.98" cy="390.34" r="1.7" fill="#6f87d8"/><circle cx="731.28" cy="395.31" r="1.7" fill="#6f87d8"/><circle cx="741.58" cy="397.80" r="1.7" fill="#6f87d8"/><circle cx="751.89" cy="395.31" r="1.7" fill="#6f87d8"/><circle cx="762.19" cy="395.31" r="1.7" fill="#6f87d8"/><circle cx="772.49" cy="394.48" r="1.7" fill="#6f87d8"/><circle cx="782.80" cy="382.05" r="1.7" fill="#6f87d8"/><circle cx="793.10" cy="386.19" r="1.7" fill="#6f87d8"/><circle cx="803.40" cy="392.00" r="1.7" fill="#6f87d8"/><circle cx="813.70" cy="393.66" r="1.7" fill="#6f87d8"/><path d="M113.10,394.48 C114.65,394.61 120.31,395.93 123.40,395.31 C126.49,394.69 130.62,390.77 133.71,390.34 C136.80,389.90 140.92,392.54 144.01,392.41 C147.10,392.29 151.22,389.07 154.31,389.51 C157.40,389.95 161.52,395.44 164.62,395.31 C167.71,395.19 171.83,389.30 174.92,388.68 C178.01,388.06 182.13,390.79 185.22,391.17 C188.31,391.54 192.43,391.17 195.52,391.17 C198.61,391.17 202.74,391.04 205.83,391.17 C208.92,391.29 213.04,392.49 216.13,392.00 C219.22,391.50 223.34,387.60 226.43,387.85 C229.52,388.10 233.65,392.29 236.74,393.66 C239.83,395.02 243.95,399.33 247.04,396.97 C250.13,394.61 254.25,389.10 257.34,377.90 C260.43,366.71 264.55,319.38 267.64,322.36 C270.74,325.35 274.86,387.23 277.95,397.80 C281.04,408.37 285.16,394.57 288.25,392.83 C291.34,391.09 295.46,386.69 298.55,386.19 C301.64,385.70 305.77,388.52 308.86,389.51 C311.95,390.50 316.07,392.08 319.16,392.83 C322.25,393.57 326.37,394.73 329.46,394.48 C332.55,394.24 336.68,390.67 339.77,391.17 C342.86,391.67 346.98,396.81 350.07,397.80 C353.16,398.79 357.28,399.04 360.37,397.80 C363.46,396.56 367.58,390.13 370.68,389.51 C373.77,388.89 377.89,393.90 380.98,393.66 C384.07,393.41 388.19,387.85 391.28,387.85 C394.37,387.85 398.49,393.28 401.58,393.66 C404.67,394.03 408.80,390.84 411.89,390.34 C414.98,389.84 419.10,389.47 422.19,390.34 C425.28,391.21 429.40,395.02 432.49,396.14 C435.58,397.26 439.71,398.42 442.80,397.80 C445.89,397.18 450.01,393.49 453.10,392.00 C456.19,390.50 460.31,388.60 463.40,387.85 C466.49,387.11 470.61,386.77 473.71,387.02 C476.80,387.27 480.92,388.64 484.01,389.51 C487.10,390.38 491.22,391.71 494.31,392.83 C497.40,393.95 501.52,396.85 504.61,396.97 C507.70,397.10 511.83,394.40 514.92,393.66 C518.01,392.91 522.13,392.00 525.22,392.00 C528.31,392.00 532.43,394.40 535.52,393.66 C538.61,392.91 542.74,386.65 545.83,387.02 C548.92,387.40 553.04,395.40 556.13,396.14 C559.22,396.89 563.34,392.12 566.43,392.00 C569.52,391.87 573.64,394.57 576.74,395.31 C579.83,396.06 583.95,397.59 587.04,396.97 C590.13,396.35 594.25,391.29 597.34,391.17 C600.43,391.04 604.55,396.52 607.64,396.14 C610.73,395.77 614.86,390.30 617.95,388.68 C621.04,387.06 625.16,384.49 628.25,385.37 C631.34,386.24 635.46,393.99 638.55,394.48 C641.64,394.98 645.77,388.81 648.86,388.68 C651.95,388.56 656.07,394.77 659.16,393.66 C662.25,392.54 666.37,380.72 669.46,381.22 C672.55,381.72 676.67,395.48 679.77,396.97 C682.86,398.46 686.98,392.91 690.07,391.17 C693.16,389.43 697.28,385.12 700.37,385.37 C703.46,385.61 707.58,392.33 710.67,392.83 C713.76,393.32 717.89,388.56 720.98,388.68 C724.07,388.81 728.19,392.41 731.28,393.66 C734.37,394.90 738.49,396.97 741.58,396.97 C744.67,396.97 748.80,394.03 751.89,393.66 C754.98,393.28 759.10,394.61 762.19,394.48 C765.28,394.36 769.40,394.94 772.49,392.83 C775.58,390.71 779.70,381.76 782.80,380.39 C785.89,379.02 790.01,382.21 793.10,383.71 C796.19,385.20 800.31,388.97 803.40,390.34 C806.49,391.71 812.16,392.45 813.70,392.83" fill="none" stroke="#663db8" stroke-width="2.0" stroke-linejoin="round" clip-path="url(#clip1)"/><circle cx="113.10" cy="394.48" r="1.7" fill="#663db8"/><circle cx="123.40" cy="395.31" r="1.7" fill="#663db8"/><circle cx="133.71" cy="390.34" r="1.7" fill="#663db8"/><circle cx="144.01" cy="392.41" r="1.7" fill="#663db8"/><circle cx="154.31" cy="389.51" r="1.7" fill="#663db8"/><circle cx="164.62" cy="395.31" r="1.7" fill="#663db8"/><circle cx="174.92" cy="388.68" r="1.7" fill="#663db8"/><circle cx="185.22" cy="391.17" r="1.7" fill="#663db8"/><circle cx="195.52" cy="391.17" r="1.7" fill="#663db8"/><circle cx="205.83" cy="391.17" r="1.7" fill="#663db8"/><circle cx="216.13" cy="392.00" r="1.7" fill="#663db8"/><circle cx="226.43" cy="387.85" r="1.7" fill="#663db8"/><circle cx="236.74" cy="393.66" r="1.7" fill="#663db8"/><circle cx="247.04" cy="396.97" r="1.7" fill="#663db8"/><circle cx="257.34" cy="377.90" r="1.7" fill="#663db8"/><circle cx="267.64" cy="322.36" r="1.7" fill="#663db8"/><circle cx="277.95" cy="397.80" r="1.7" fill="#663db8"/><circle cx="288.25" cy="392.83" r="1.7" fill="#663db8"/><circle cx="298.55" cy="386.19" r="1.7" fill="#663db8"/><circle cx="308.86" cy="389.51" r="1.7" fill="#663db8"/><circle cx="319.16" cy="392.83" r="1.7" fill="#663db8"/><circle cx="329.46" cy="394.48" r="1.7" fill="#663db8"/><circle cx="339.77" cy="391.17" r="1.7" fill="#663db8"/><circle cx="350.07" cy="397.80" r="1.7" fill="#663db8"/><circle cx="360.37" cy="397.80" r="1.7" fill="#663db8"/><circle cx="370.68" cy="389.51" r="1.7" fill="#663db8"/><circle cx="380.98" cy="393.66" r="1.7" fill="#663db8"/><circle cx="391.28" cy="387.85" r="1.7" fill="#663db8"/><circle cx="401.58" cy="393.66" r="1.7" fill="#663db8"/><circle cx="411.89" cy="390.34" r="1.7" fill="#663db8"/><circle cx="422.19" cy="390.34" r="1.7" fill="#663db8"/><circle cx="432.49" cy="396.14" r="1.7" fill="#663db8"/><circle cx="442.80" cy="397.80" r="1.7" fill="#663db8"/><circle cx="453.10" cy="392.00" r="1.7" fill="#663db8"/><circle cx="463.40" cy="387.85" r="1.7" fill="#663db8"/><circle cx="473.71" cy="387.02" r="1.7" fill="#663db8"/><circle cx="484.01" cy="389.51" r="1.7" fill="#663db8"/><circle cx="494.31" cy="392.83" r="1.7" fill="#663db8"/><circle cx="504.61" cy="396.97" r="1.7" fill="#663db8"/><circle cx="514.92" cy="393.66" r="1.7" fill="#663db8"/><circle cx="525.22" cy="392.00" r="1.7" fill="#663db8"/><circle cx="535.52" cy="393.66" r="1.7" fill="#663db8"/><circle cx="545.83" cy="387.02" r="1.7" fill="#663db8"/><circle cx="556.13" cy="396.14" r="1.7" fill="#663db8"/><circle cx="566.43" cy="392.00" r="1.7" fill="#663db8"/><circle cx="576.74" cy="395.31" r="1.7" fill="#663db8"/><circle cx="587.04" cy="396.97" r="1.7" fill="#663db8"/><circle cx="597.34" cy="391.17" r="1.7" fill="#663db8"/><circle cx="607.64" cy="396.14" r="1.7" fill="#663db8"/><circle cx="617.95" cy="388.68" r="1.7" fill="#663db8"/><circle cx="628.25" cy="385.37" r="1.7" fill="#663db8"/><circle cx="638.55" cy="394.48" r="1.7" fill="#663db8"/><circle cx="648.86" cy="388.68" r="1.7" fill="#663db8"/><circle cx="659.16" cy="393.66" r="1.7" fill="#663db8"/><circle cx="669.46" cy="381.22" r="1.7" fill="#663db8"/><circle cx="679.77" cy="396.97" r="1.7" fill="#663db8"/><circle cx="690.07" cy="391.17" r="1.7" fill="#663db8"/><circle cx="700.37" cy="385.37" r="1.7" fill="#663db8"/><circle cx="710.67" cy="392.83" r="1.7" fill="#663db8"/><circle cx="720.98" cy="388.68" r="1.7" fill="#663db8"/><circle cx="731.28" cy="393.66" r="1.7" fill="#663db8"/><circle cx="741.58" cy="396.97" r="1.7" fill="#663db8"/><circle cx="751.89" cy="393.66" r="1.7" fill="#663db8"/><circle cx="762.19" cy="394.48" r="1.7" fill="#663db8"/><circle cx="772.49" cy="392.83" r="1.7" fill="#663db8"/><circle cx="782.80" cy="380.39" r="1.7" fill="#663db8"/><circle cx="793.10" cy="383.71" r="1.7" fill="#663db8"/><circle cx="803.40" cy="390.34" r="1.7" fill="#663db8"/><circle cx="813.70" cy="392.83" r="1.7" fill="#663db8"/><path d="M113.10,392.83 C114.65,392.95 120.31,394.77 123.40,393.66 C126.49,392.54 130.62,385.61 133.71,385.37 C136.80,385.12 140.92,391.87 144.01,392.00 C147.10,392.12 151.22,385.82 154.31,386.19 C157.40,386.57 161.52,394.48 164.62,394.48 C167.71,394.48 171.83,386.94 174.92,386.19 C178.01,385.45 182.13,388.89 185.22,389.51 C188.31,390.13 192.43,390.21 195.52,390.34 C198.61,390.46 202.74,390.21 205.83,390.34 C208.92,390.46 213.04,391.91 216.13,391.17 C219.22,390.42 223.34,385.12 226.43,385.37 C229.52,385.61 233.65,391.21 236.74,392.83 C239.83,394.44 243.95,398.75 247.04,396.14 C250.13,393.53 254.25,386.86 257.34,375.42 C260.43,363.98 264.55,317.01 267.64,319.87 C270.74,322.73 274.86,383.54 277.95,394.48 C281.04,405.43 285.16,394.19 288.25,392.83 C291.34,391.46 295.46,386.48 298.55,385.37 C301.64,384.25 305.77,384.49 308.86,385.37 C311.95,386.24 316.07,389.92 319.16,391.17 C322.25,392.41 326.37,393.90 329.46,393.66 C332.55,393.41 336.68,389.01 339.77,389.51 C342.86,390.01 346.98,395.85 350.07,396.97 C353.16,398.09 357.28,398.21 360.37,396.97 C363.46,395.73 367.58,389.30 370.68,388.68 C373.77,388.06 377.89,393.07 380.98,392.83 C384.07,392.58 388.19,386.90 391.28,387.02 C394.37,387.15 398.49,394.77 401.58,393.66 C404.67,392.54 408.80,380.43 411.89,379.56 C414.98,378.69 419.10,385.74 422.19,387.85 C425.28,389.97 429.40,395.02 432.49,393.66 C435.58,392.29 439.71,378.98 442.80,378.73 C445.89,378.48 450.01,390.75 453.10,392.00 C456.19,393.24 460.31,387.89 463.40,387.02 C466.49,386.15 470.61,385.82 473.71,386.19 C476.80,386.57 480.92,388.64 484.01,389.51 C487.10,390.38 491.22,391.25 494.31,392.00 C497.40,392.74 501.52,394.24 504.61,394.48 C507.70,394.73 511.83,394.03 514.92,393.66 C518.01,393.28 522.13,392.25 525.22,392.00 C528.31,391.75 532.43,393.12 535.52,392.00 C538.61,390.88 542.74,384.29 545.83,384.54 C548.92,384.78 553.04,394.65 556.13,393.66 C559.22,392.66 563.34,377.78 566.43,377.90 C569.52,378.03 573.64,391.87 576.74,394.48 C579.83,397.10 583.95,395.93 587.04,395.31 C590.13,394.69 594.25,390.34 597.34,390.34 C600.43,390.34 604.55,395.69 607.64,395.31 C610.73,394.94 614.86,389.59 617.95,387.85 C621.04,386.11 625.16,382.96 628.25,383.71 C631.34,384.45 635.46,392.70 638.55,392.83 C641.64,392.95 645.77,384.41 648.86,384.54 C651.95,384.66 656.07,394.40 659.16,393.66 C662.25,392.91 666.37,379.44 669.46,379.56 C672.55,379.69 676.67,392.87 679.77,394.48 C682.86,396.10 686.98,392.08 690.07,390.34 C693.16,388.60 697.28,382.75 700.37,382.88 C703.46,383.00 707.58,390.55 710.67,391.17 C713.76,391.79 717.89,386.90 720.98,387.02 C724.07,387.15 728.19,390.63 731.28,392.00 C734.37,393.36 738.49,396.02 741.58,396.14 C744.67,396.27 748.80,393.32 751.89,392.83 C754.98,392.33 759.10,393.20 762.19,392.83 C765.28,392.45 769.40,392.58 772.49,390.34 C775.58,388.10 779.70,379.15 782.80,377.90 C785.89,376.66 790.01,380.31 793.10,382.05 C796.19,383.79 800.31,388.02 803.40,389.51 C806.49,391.00 812.16,391.62 813.70,392.00" fill="none" stroke="#9e3533" stroke-width="2.3" stroke-linejoin="round" clip-path="url(#clip1)"/><circle cx="113.10" cy="392.83" r="2.0" fill="#9e3533"/><circle cx="123.40" cy="393.66" r="2.0" fill="#9e3533"/><circle cx="133.71" cy="385.37" r="2.0" fill="#9e3533"/><circle cx="144.01" cy="392.00" r="2.0" fill="#9e3533"/><circle cx="154.31" cy="386.19" r="2.0" fill="#9e3533"/><circle cx="164.62" cy="394.48" r="2.0" fill="#9e3533"/><circle cx="174.92" cy="386.19" r="2.0" fill="#9e3533"/><circle cx="185.22" cy="389.51" r="2.0" fill="#9e3533"/><circle cx="195.52" cy="390.34" r="2.0" fill="#9e3533"/><circle cx="205.83" cy="390.34" r="2.0" fill="#9e3533"/><circle cx="216.13" cy="391.17" r="2.0" fill="#9e3533"/><circle cx="226.43" cy="385.37" r="2.0" fill="#9e3533"/><circle cx="236.74" cy="392.83" r="2.0" fill="#9e3533"/><circle cx="247.04" cy="396.14" r="2.0" fill="#9e3533"/><circle cx="257.34" cy="375.42" r="2.0" fill="#9e3533"/><circle cx="267.64" cy="319.87" r="2.0" fill="#9e3533"/><circle cx="277.95" cy="394.48" r="2.0" fill="#9e3533"/><circle cx="288.25" cy="392.83" r="2.0" fill="#9e3533"/><circle cx="298.55" cy="385.37" r="2.0" fill="#9e3533"/><circle cx="308.86" cy="385.37" r="2.0" fill="#9e3533"/><circle cx="319.16" cy="391.17" r="2.0" fill="#9e3533"/><circle cx="329.46" cy="393.66" r="2.0" fill="#9e3533"/><circle cx="339.77" cy="389.51" r="2.0" fill="#9e3533"/><circle cx="350.07" cy="396.97" r="2.0" fill="#9e3533"/><circle cx="360.37" cy="396.97" r="2.0" fill="#9e3533"/><circle cx="370.68" cy="388.68" r="2.0" fill="#9e3533"/><circle cx="380.98" cy="392.83" r="2.0" fill="#9e3533"/><circle cx="391.28" cy="387.02" r="2.0" fill="#9e3533"/><circle cx="401.58" cy="393.66" r="2.0" fill="#9e3533"/><circle cx="411.89" cy="379.56" r="2.0" fill="#9e3533"/><circle cx="422.19" cy="387.85" r="2.0" fill="#9e3533"/><circle cx="432.49" cy="393.66" r="2.0" fill="#9e3533"/><circle cx="442.80" cy="378.73" r="2.0" fill="#9e3533"/><circle cx="453.10" cy="392.00" r="2.0" fill="#9e3533"/><circle cx="463.40" cy="387.02" r="2.0" fill="#9e3533"/><circle cx="473.71" cy="386.19" r="2.0" fill="#9e3533"/><circle cx="484.01" cy="389.51" r="2.0" fill="#9e3533"/><circle cx="494.31" cy="392.00" r="2.0" fill="#9e3533"/><circle cx="504.61" cy="394.48" r="2.0" fill="#9e3533"/><circle cx="514.92" cy="393.66" r="2.0" fill="#9e3533"/><circle cx="525.22" cy="392.00" r="2.0" fill="#9e3533"/><circle cx="535.52" cy="392.00" r="2.0" fill="#9e3533"/><circle cx="545.83" cy="384.54" r="2.0" fill="#9e3533"/><circle cx="556.13" cy="393.66" r="2.0" fill="#9e3533"/><circle cx="566.43" cy="377.90" r="2.0" fill="#9e3533"/><circle cx="576.74" cy="394.48" r="2.0" fill="#9e3533"/><circle cx="587.04" cy="395.31" r="2.0" fill="#9e3533"/><circle cx="597.34" cy="390.34" r="2.0" fill="#9e3533"/><circle cx="607.64" cy="395.31" r="2.0" fill="#9e3533"/><circle cx="617.95" cy="387.85" r="2.0" fill="#9e3533"/><circle cx="628.25" cy="383.71" r="2.0" fill="#9e3533"/><circle cx="638.55" cy="392.83" r="2.0" fill="#9e3533"/><circle cx="648.86" cy="384.54" r="2.0" fill="#9e3533"/><circle cx="659.16" cy="393.66" r="2.0" fill="#9e3533"/><circle cx="669.46" cy="379.56" r="2.0" fill="#9e3533"/><circle cx="679.77" cy="394.48" r="2.0" fill="#9e3533"/><circle cx="690.07" cy="390.34" r="2.0" fill="#9e3533"/><circle cx="700.37" cy="382.88" r="2.0" fill="#9e3533"/><circle cx="710.67" cy="391.17" r="2.0" fill="#9e3533"/><circle cx="720.98" cy="387.02" r="2.0" fill="#9e3533"/><circle cx="731.28" cy="392.00" r="2.0" fill="#9e3533"/><circle cx="741.58" cy="396.14" r="2.0" fill="#9e3533"/><circle cx="751.89" cy="392.83" r="2.0" fill="#9e3533"/><circle cx="762.19" cy="392.83" r="2.0" fill="#9e3533"/><circle cx="772.49" cy="390.34" r="2.0" fill="#9e3533"/><circle cx="782.80" cy="377.90" r="2.0" fill="#9e3533"/><circle cx="793.10" cy="382.05" r="2.0" fill="#9e3533"/><circle cx="803.40" cy="389.51" r="2.0" fill="#9e3533"/><circle cx="813.70" cy="392.00" r="2.0" fill="#9e3533"/><line x1="1006.3" y1="381.14" x2="1010.9" y2="381.14" stroke="#d4d4d4" stroke-width="1"/><line x1="1006.3" y1="364.58" x2="1010.9" y2="364.58" stroke="#d4d4d4" stroke-width="1"/><line x1="1006.3" y1="348.02" x2="1010.9" y2="348.02" stroke="#d4d4d4" stroke-width="1"/><line x1="1006.3" y1="331.46" x2="1010.9" y2="331.46" stroke="#d4d4d4" stroke-width="1"/><line x1="1086.30" y1="397.7" x2="1086.30" y2="402" stroke="#d4d4d4" stroke-width="1"/><line x1="1194.93" y1="397.7" x2="1194.93" y2="402" stroke="#d4d4d4" stroke-width="1"/><line x1="1303.56" y1="397.7" x2="1303.56" y2="402" stroke="#d4d4d4" stroke-width="1"/><line x1="1412.19" y1="397.7" x2="1412.19" y2="402" stroke="#d4d4d4" stroke-width="1"/><line x1="1520.82" y1="397.7" x2="1520.82" y2="402" stroke="#d4d4d4" stroke-width="1"/><line x1="1629.45" y1="397.7" x2="1629.45" y2="402" stroke="#d4d4d4" stroke-width="1"/><line x1="1738.08" y1="397.7" x2="1738.08" y2="402" stroke="#d4d4d4" stroke-width="1"/><line x1="1846.71" y1="397.7" x2="1846.71" y2="402" stroke="#d4d4d4" stroke-width="1"/><line x1="1955.34" y1="397.7" x2="1955.34" y2="402" stroke="#d4d4d4" stroke-width="1"/><line x1="2063.97" y1="397.7" x2="2063.97" y2="402" stroke="#d4d4d4" stroke-width="1"/><line x1="2172.60" y1="397.7" x2="2172.60" y2="402" stroke="#d4d4d4" stroke-width="1"/><line x1="2281.23" y1="397.7" x2="2281.23" y2="402" stroke="#d4d4d4" stroke-width="1"/><rect x="1068.70" y="393.23" width="15.4" height="3.97" fill="#a9cfdc" stroke="#7db4c8" stroke-width="1"/><rect x="1086.81" y="394.06" width="15.4" height="3.14" fill="#a9cfdc" stroke="#7db4c8" stroke-width="1"/><rect x="1104.91" y="385.78" width="15.4" height="11.42" fill="#a9cfdc" stroke="#7db4c8" stroke-width="1"/><rect x="1123.02" y="392.40" width="15.4" height="4.80" fill="#a9cfdc" stroke="#7db4c8" stroke-width="1"/><rect x="1141.12" y="386.61" width="15.4" height="10.59" fill="#a9cfdc" stroke="#7db4c8" stroke-width="1"/><rect x="1159.23" y="394.89" width="15.4" height="2.31" fill="#a9cfdc" stroke="#7db4c8" stroke-width="1"/><rect x="1177.33" y="386.61" width="15.4" height="10.59" fill="#a9cfdc" stroke="#7db4c8" stroke-width="1"/><rect x="1195.43" y="389.92" width="15.4" height="7.28" fill="#a9cfdc" stroke="#7db4c8" stroke-width="1"/><rect x="1213.54" y="390.75" width="15.4" height="6.45" fill="#a9cfdc" stroke="#7db4c8" stroke-width="1"/><rect x="1231.64" y="390.75" width="15.4" height="6.45" fill="#a9cfdc" stroke="#7db4c8" stroke-width="1"/><rect x="1249.75" y="391.58" width="15.4" height="5.62" fill="#a9cfdc" stroke="#7db4c8" stroke-width="1"/><rect x="1267.86" y="385.78" width="15.4" height="11.42" fill="#a9cfdc" stroke="#7db4c8" stroke-width="1"/><rect x="1285.96" y="393.23" width="15.4" height="3.97" fill="#a9cfdc" stroke="#7db4c8" stroke-width="1"/><rect x="1304.07" y="396.54" width="15.4" height="0.66" fill="#a9cfdc" stroke="#7db4c8" stroke-width="1"/><rect x="1322.17" y="375.84" width="15.4" height="21.36" fill="#a9cfdc" stroke="#7db4c8" stroke-width="1"/><rect x="1340.28" y="320.37" width="15.4" height="76.83" fill="#a9cfdc" stroke="#7db4c8" stroke-width="1"/><rect x="1358.38" y="394.89" width="15.4" height="2.31" fill="#a9cfdc" stroke="#7db4c8" stroke-width="1"/><rect x="1376.49" y="393.23" width="15.4" height="3.97" fill="#a9cfdc" stroke="#7db4c8" stroke-width="1"/><rect x="1394.59" y="385.78" width="15.4" height="11.42" fill="#a9cfdc" stroke="#7db4c8" stroke-width="1"/><rect x="1412.70" y="385.78" width="15.4" height="11.42" fill="#a9cfdc" stroke="#7db4c8" stroke-width="1"/><rect x="1430.80" y="391.58" width="15.4" height="5.62" fill="#a9cfdc" stroke="#7db4c8" stroke-width="1"/><rect x="1448.90" y="394.06" width="15.4" height="3.14" fill="#a9cfdc" stroke="#7db4c8" stroke-width="1"/><rect x="1467.01" y="389.92" width="15.4" height="7.28" fill="#a9cfdc" stroke="#7db4c8" stroke-width="1"/><rect x="1485.12" y="397.37" width="15.4" height="0.60" fill="#a9cfdc" stroke="#7db4c8" stroke-width="1"/><rect x="1503.22" y="397.37" width="15.4" height="0.60" fill="#a9cfdc" stroke="#7db4c8" stroke-width="1"/><rect x="1521.33" y="389.09" width="15.4" height="8.11" fill="#a9cfdc" stroke="#7db4c8" stroke-width="1"/><rect x="1539.43" y="393.23" width="15.4" height="3.97" fill="#a9cfdc" stroke="#7db4c8" stroke-width="1"/><rect x="1557.54" y="387.44" width="15.4" height="9.76" fill="#a9cfdc" stroke="#7db4c8" stroke-width="1"/><rect x="1575.64" y="394.06" width="15.4" height="3.14" fill="#a9cfdc" stroke="#7db4c8" stroke-width="1"/><rect x="1593.74" y="379.98" width="15.4" height="17.22" fill="#a9cfdc" stroke="#7db4c8" stroke-width="1"/><rect x="1611.85" y="388.26" width="15.4" height="8.94" fill="#a9cfdc" stroke="#7db4c8" stroke-width="1"/><rect x="1629.95" y="394.06" width="15.4" height="3.14" fill="#a9cfdc" stroke="#7db4c8" stroke-width="1"/><rect x="1648.06" y="379.16" width="15.4" height="18.04" fill="#a9cfdc" stroke="#7db4c8" stroke-width="1"/><rect x="1666.16" y="392.40" width="15.4" height="4.80" fill="#a9cfdc" stroke="#7db4c8" stroke-width="1"/><rect x="1684.27" y="387.44" width="15.4" height="9.76" fill="#a9cfdc" stroke="#7db4c8" stroke-width="1"/><rect x="1702.38" y="386.61" width="15.4" height="10.59" fill="#a9cfdc" stroke="#7db4c8" stroke-width="1"/><rect x="1720.48" y="389.92" width="15.4" height="7.28" fill="#a9cfdc" stroke="#7db4c8" stroke-width="1"/><rect x="1738.59" y="392.40" width="15.4" height="4.80" fill="#a9cfdc" stroke="#7db4c8" stroke-width="1"/><rect x="1756.69" y="394.89" width="15.4" height="2.31" fill="#a9cfdc" stroke="#7db4c8" stroke-width="1"/><rect x="1774.80" y="394.06" width="15.4" height="3.14" fill="#a9cfdc" stroke="#7db4c8" stroke-width="1"/><rect x="1792.90" y="392.40" width="15.4" height="4.80" fill="#a9cfdc" stroke="#7db4c8" stroke-width="1"/><rect x="1811.01" y="392.40" width="15.4" height="4.80" fill="#a9cfdc" stroke="#7db4c8" stroke-width="1"/><rect x="1829.11" y="384.95" width="15.4" height="12.25" fill="#a9cfdc" stroke="#7db4c8" stroke-width="1"/><rect x="1847.22" y="394.06" width="15.4" height="3.14" fill="#a9cfdc" stroke="#7db4c8" stroke-width="1"/><rect x="1865.32" y="378.33" width="15.4" height="18.87" fill="#a9cfdc" stroke="#7db4c8" stroke-width="1"/><rect x="1883.43" y="394.89" width="15.4" height="2.31" fill="#a9cfdc" stroke="#7db4c8" stroke-width="1"/><rect x="1901.53" y="395.72" width="15.4" height="1.48" fill="#a9cfdc" stroke="#7db4c8" stroke-width="1"/><rect x="1919.64" y="390.75" width="15.4" height="6.45" fill="#a9cfdc" stroke="#7db4c8" stroke-width="1"/><rect x="1937.74" y="395.72" width="15.4" height="1.48" fill="#a9cfdc" stroke="#7db4c8" stroke-width="1"/><rect x="1955.85" y="388.26" width="15.4" height="8.94" fill="#a9cfdc" stroke="#7db4c8" stroke-width="1"/><rect x="1973.95" y="384.12" width="15.4" height="13.08" fill="#a9cfdc" stroke="#7db4c8" stroke-width="1"/><rect x="1992.06" y="393.23" width="15.4" height="3.97" fill="#a9cfdc" stroke="#7db4c8" stroke-width="1"/><rect x="2010.16" y="384.95" width="15.4" height="12.25" fill="#a9cfdc" stroke="#7db4c8" stroke-width="1"/><rect x="2028.27" y="394.06" width="15.4" height="3.14" fill="#a9cfdc" stroke="#7db4c8" stroke-width="1"/><rect x="2046.37" y="379.98" width="15.4" height="17.22" fill="#a9cfdc" stroke="#7db4c8" stroke-width="1"/><rect x="2064.47" y="394.89" width="15.4" height="2.31" fill="#a9cfdc" stroke="#7db4c8" stroke-width="1"/><rect x="2082.58" y="390.75" width="15.4" height="6.45" fill="#a9cfdc" stroke="#7db4c8" stroke-width="1"/><rect x="2100.69" y="383.30" width="15.4" height="13.90" fill="#a9cfdc" stroke="#7db4c8" stroke-width="1"/><rect x="2118.79" y="391.58" width="15.4" height="5.62" fill="#a9cfdc" stroke="#7db4c8" stroke-width="1"/><rect x="2136.89" y="387.44" width="15.4" height="9.76" fill="#a9cfdc" stroke="#7db4c8" stroke-width="1"/><rect x="2155.00" y="392.40" width="15.4" height="4.80" fill="#a9cfdc" stroke="#7db4c8" stroke-width="1"/><rect x="2173.11" y="396.54" width="15.4" height="0.66" fill="#a9cfdc" stroke="#7db4c8" stroke-width="1"/><rect x="2191.21" y="393.23" width="15.4" height="3.97" fill="#a9cfdc" stroke="#7db4c8" stroke-width="1"/><rect x="2209.32" y="393.23" width="15.4" height="3.97" fill="#a9cfdc" stroke="#7db4c8" stroke-width="1"/><rect x="2227.42" y="390.75" width="15.4" height="6.45" fill="#a9cfdc" stroke="#7db4c8" stroke-width="1"/><rect x="2245.53" y="378.33" width="15.4" height="18.87" fill="#a9cfdc" stroke="#7db4c8" stroke-width="1"/><rect x="2263.63" y="382.47" width="15.4" height="14.73" fill="#a9cfdc" stroke="#7db4c8" stroke-width="1"/><rect x="2281.74" y="389.92" width="15.4" height="7.28" fill="#a9cfdc" stroke="#7db4c8" stroke-width="1"/><rect x="2299.84" y="392.40" width="15.4" height="4.80" fill="#a9cfdc" stroke="#7db4c8" stroke-width="1"/><line x1="2316.5" y1="315" x2="2316.5" y2="397.6" stroke="#eee" stroke-width="1.2"/><circle cx="2328.3" cy="320.6" r="6.1" fill="#b0b0b0"/><path d="M2329.5,317.3 L2326.4,320.6 L2329.5,323.90000000000003" fill="none" stroke="#fff" stroke-width="2.3"/><path d="M311.60,528.20 A59.5,59.5 0 1 1 266.15,626.10 L278.83,615.39 A42.9,42.9 0 1 0 311.60,544.80Z" fill="#daa05d" stroke="#fff" stroke-width="0.8"/><path d="M266.15,626.10 A59.5,59.5 0 0 1 288.16,533.01 L294.70,548.27 A42.9,42.9 0 0 0 278.83,615.39Z" fill="#bfae40" stroke="#fff" stroke-width="0.8"/><path d="M288.16,533.01 A59.5,59.5 0 0 1 298.82,529.59 L302.39,545.80 A42.9,42.9 0 0 0 294.70,548.27Z" fill="#444ec6" stroke="#fff" stroke-width="0.8"/><path d="M298.82,529.59 A59.5,59.5 0 0 1 308.17,528.30 L309.13,544.87 A42.9,42.9 0 0 0 302.39,545.80Z" fill="#c4503f" stroke="#fff" stroke-width="0.8"/><path d="M308.17,528.30 A59.5,59.5 0 0 1 311.60,528.20 L311.60,544.80 A42.9,42.9 0 0 0 309.13,544.87Z" fill="#3cb0c0" stroke="#fff" stroke-width="0.8"/><circle cx="593" cy="526.7" r="6.1" fill="#b0b0b0"/><path d="M591.8,523.4000000000001 L594.9,526.7 L591.8,530.0" fill="none" stroke="#fff" stroke-width="2.3"/><circle cx="609.7" cy="524.10" r="4.6" fill="#daa05d"/><circle cx="609.7" cy="541.00" r="4.6" fill="#bfae40"/><circle cx="609.7" cy="557.20" r="4.6" fill="#444ec6"/><circle cx="609.7" cy="573.30" r="4.6" fill="#c4503f"/><circle cx="609.7" cy="590.10" r="4.6" fill="#3cb0c0"/><line x1="836.4" y1="618.54" x2="840.7" y2="618.54" stroke="#d4d4d4" stroke-width="1"/><line x1="836.4" y1="594.18" x2="840.7" y2="594.18" stroke="#d4d4d4" stroke-width="1"/><line x1="836.4" y1="569.82" x2="840.7" y2="569.82" stroke="#d4d4d4" stroke-width="1"/><line x1="836.4" y1="545.46" x2="840.7" y2="545.46" stroke="#d4d4d4" stroke-width="1"/><line x1="869.50" y1="643" x2="869.50" y2="647.7" stroke="#d4d4d4" stroke-width="1"/><line x1="911.18" y1="643" x2="911.18" y2="647.7" stroke="#d4d4d4" stroke-width="1"/><line x1="952.86" y1="643" x2="952.86" y2="647.7" stroke="#d4d4d4" stroke-width="1"/><line x1="994.54" y1="643" x2="994.54" y2="647.7" stroke="#d4d4d4" stroke-width="1"/><line x1="1036.22" y1="643" x2="1036.22" y2="647.7" stroke="#d4d4d4" stroke-width="1"/><line x1="1077.90" y1="643" x2="1077.90" y2="647.7" stroke="#d4d4d4" stroke-width="1"/><line x1="1119.58" y1="643" x2="1119.58" y2="647.7" stroke="#d4d4d4" stroke-width="1"/><line x1="1161.26" y1="643" x2="1161.26" y2="647.7" stroke="#d4d4d4" stroke-width="1"/><line x1="1202.94" y1="643" x2="1202.94" y2="647.7" stroke="#d4d4d4" stroke-width="1"/><line x1="1244.62" y1="643" x2="1244.62" y2="647.7" stroke="#d4d4d4" stroke-width="1"/><line x1="1286.30" y1="643" x2="1286.30" y2="647.7" stroke="#d4d4d4" stroke-width="1"/><line x1="1327.98" y1="643" x2="1327.98" y2="647.7" stroke="#d4d4d4" stroke-width="1"/><defs><clipPath id="clip4"><rect x="850" y="510" width="500" height="133.4"/></clipPath></defs><path d="M862.55,636.81 C863.59,636.90 867.41,638.15 869.50,637.42 C871.58,636.69 874.36,632.39 876.44,631.94 C878.53,631.48 881.31,635.29 883.39,634.37 C885.48,633.46 888.25,625.30 890.34,625.85 C892.42,626.40 895.20,638.03 897.28,638.03 C899.37,638.03 902.15,626.94 904.23,625.85 C906.32,624.75 909.09,629.81 911.18,630.72 C913.26,631.63 916.04,631.76 918.13,631.94 C920.21,632.12 922.99,631.57 925.07,631.94 C927.16,632.30 929.94,634.92 932.02,634.37 C934.10,633.83 936.88,627.92 938.97,628.28 C941.05,628.65 943.83,634.80 945.91,636.81 C948.00,638.82 950.78,641.86 952.86,641.68 C954.95,641.50 957.72,637.78 959.81,635.59 C961.89,633.40 964.67,626.15 966.75,627.07 C968.84,627.98 971.62,639.86 973.70,641.68 C975.79,643.51 978.56,641.62 980.65,639.25 C982.73,636.87 985.51,628.04 987.60,625.85 C989.68,623.66 992.46,622.80 994.54,624.63 C996.63,626.46 999.41,636.20 1001.49,638.03 C1003.57,639.86 1006.35,637.91 1008.44,636.81 C1010.52,635.71 1013.30,629.99 1015.38,630.72 C1017.47,631.45 1020.25,640.04 1022.33,641.68 C1024.42,643.33 1027.19,643.51 1029.28,641.68 C1031.36,639.86 1034.14,630.42 1036.22,629.50 C1038.31,628.59 1041.09,635.96 1043.17,635.59 C1045.26,635.23 1048.03,626.88 1050.12,627.07 C1052.20,627.25 1054.98,638.09 1057.07,636.81 C1059.15,635.53 1061.93,619.82 1064.01,618.54 C1066.10,617.26 1068.88,625.54 1070.96,628.28 C1073.04,631.02 1075.82,634.62 1077.91,636.81 C1079.99,639.00 1082.77,643.27 1084.85,642.90 C1086.94,642.53 1089.72,636.20 1091.80,634.37 C1093.89,632.55 1096.66,631.09 1098.75,630.72 C1100.83,630.35 1103.61,630.84 1105.69,631.94 C1107.78,633.03 1110.56,637.06 1112.64,638.03 C1114.73,639.00 1117.50,638.03 1119.59,638.39 C1121.67,638.76 1124.45,640.61 1126.54,640.46 C1128.62,640.32 1131.40,637.42 1133.48,637.42 C1135.57,637.42 1138.35,640.08 1140.43,640.46 C1142.51,640.85 1145.29,642.53 1147.38,639.98 C1149.46,637.42 1152.24,623.80 1154.32,623.41 C1156.41,623.03 1159.19,635.77 1161.27,637.42 C1163.36,639.06 1166.13,634.10 1168.22,634.37 C1170.30,634.65 1173.08,638.33 1175.16,639.25 C1177.25,640.16 1180.03,640.83 1182.11,640.46 C1184.20,640.10 1186.97,636.90 1189.06,636.81 C1191.14,636.72 1193.92,640.17 1196.01,639.86 C1198.09,639.54 1200.87,636.58 1202.95,634.74 C1205.04,632.89 1207.82,626.88 1209.90,627.55 C1211.98,628.23 1214.76,638.22 1216.85,639.25 C1218.93,640.27 1221.71,633.95 1223.79,634.37 C1225.88,634.79 1228.66,643.87 1230.74,642.05 C1232.83,640.22 1235.60,622.80 1237.69,622.19 C1239.77,621.59 1242.55,636.57 1244.63,638.03 C1246.72,639.49 1249.50,632.85 1251.58,631.94 C1253.67,631.02 1256.44,631.66 1258.53,631.94 C1260.61,632.21 1263.39,634.42 1265.48,633.76 C1267.56,633.11 1270.34,627.55 1272.42,627.55 C1274.51,627.55 1277.29,631.83 1279.37,633.76 C1281.45,635.70 1284.23,640.19 1286.32,640.46 C1288.40,640.74 1291.18,636.32 1293.26,635.59 C1295.35,634.86 1298.13,635.87 1300.21,635.59 C1302.30,635.32 1305.07,635.23 1307.16,633.76 C1309.24,632.30 1312.02,626.12 1314.11,625.85 C1316.19,625.57 1318.97,630.48 1321.05,631.94 C1323.14,633.40 1325.91,634.50 1328.00,635.59 C1330.08,636.69 1333.90,638.70 1334.95,639.25 L1334.95,642.90 C1333.90,642.90 1330.08,642.90 1328.00,642.90 C1325.91,642.90 1323.14,642.90 1321.05,642.90 C1318.97,642.90 1316.19,642.90 1314.11,642.90 C1312.02,642.90 1309.24,642.90 1307.16,642.90 C1305.07,642.90 1302.30,642.90 1300.21,642.90 C1298.13,642.90 1295.35,642.90 1293.26,642.90 C1291.18,642.90 1288.40,642.90 1286.32,642.90 C1284.23,642.90 1281.45,642.90 1279.37,642.90 C1277.29,642.90 1274.51,642.90 1272.42,642.90 C1270.34,642.90 1267.56,642.90 1265.48,642.90 C1263.39,642.90 1260.61,642.90 1258.53,642.90 C1256.44,642.90 1253.67,642.90 1251.58,642.90 C1249.50,642.90 1246.72,642.90 1244.63,642.90 C1242.55,642.90 1239.77,642.90 1237.69,642.90 C1235.60,642.90 1232.83,642.90 1230.74,642.90 C1228.66,642.90 1225.88,642.90 1223.79,642.90 C1221.71,642.90 1218.93,642.90 1216.85,642.90 C1214.76,642.90 1211.98,642.90 1209.90,642.90 C1207.82,642.90 1205.04,642.90 1202.95,642.90 C1200.87,642.90 1198.09,642.90 1196.01,642.90 C1193.92,642.90 1191.14,642.90 1189.06,642.90 C1186.97,642.90 1184.20,642.90 1182.11,642.90 C1180.03,642.90 1177.25,642.90 1175.16,642.90 C1173.08,642.90 1170.30,642.90 1168.22,642.90 C1166.13,642.90 1163.36,642.90 1161.27,642.90 C1159.19,642.90 1156.41,642.90 1154.32,642.90 C1152.24,642.90 1149.46,642.90 1147.38,642.90 C1145.29,642.90 1142.51,642.90 1140.43,642.90 C1138.35,642.90 1135.57,642.90 1133.48,642.90 C1131.40,642.90 1128.62,642.90 1126.54,642.90 C1124.45,642.90 1121.67,642.90 1119.59,642.90 C1117.50,642.90 1114.73,642.90 1112.64,642.90 C1110.56,642.90 1107.78,642.90 1105.69,642.90 C1103.61,642.90 1100.83,642.90 1098.75,642.90 C1096.66,642.90 1093.89,642.90 1091.80,642.90 C1089.72,642.90 1086.94,642.90 1084.85,642.90 C1082.77,642.90 1079.99,642.90 1077.91,642.90 C1075.82,642.90 1073.04,642.90 1070.96,642.90 C1068.88,642.90 1066.10,642.90 1064.01,642.90 C1061.93,642.90 1059.15,642.90 1057.07,642.90 C1054.98,642.90 1052.20,642.90 1050.12,642.90 C1048.03,642.90 1045.26,642.90 1043.17,642.90 C1041.09,642.90 1038.31,642.90 1036.22,642.90 C1034.14,642.90 1031.36,642.90 1029.28,642.90 C1027.19,642.90 1024.42,642.90 1022.33,642.90 C1020.25,642.90 1017.47,642.90 1015.38,642.90 C1013.30,642.90 1010.52,642.90 1008.44,642.90 C1006.35,642.90 1003.57,642.90 1001.49,642.90 C999.41,642.90 996.63,642.90 994.54,642.90 C992.46,642.90 989.68,642.90 987.60,642.90 C985.51,642.90 982.73,642.90 980.65,642.90 C978.56,642.90 975.79,642.90 973.70,642.90 C971.62,642.90 968.84,642.90 966.75,642.90 C964.67,642.90 961.89,642.90 959.81,642.90 C957.72,642.90 954.95,642.90 952.86,642.90 C950.78,642.90 948.00,642.90 945.91,642.90 C943.83,642.90 941.05,642.90 938.97,642.90 C936.88,642.90 934.10,642.90 932.02,642.90 C929.94,642.90 927.16,642.90 925.07,642.90 C922.99,642.90 920.21,642.90 918.13,642.90 C916.04,642.90 913.26,642.90 911.18,642.90 C909.09,642.90 906.32,642.90 904.23,642.90 C902.15,642.90 899.37,642.90 897.28,642.90 C895.20,642.90 892.42,642.90 890.34,642.90 C888.25,642.90 885.48,642.90 883.39,642.90 C881.31,642.90 878.53,642.90 876.44,642.90 C874.36,642.90 871.58,642.90 869.50,642.90 C867.41,642.90 863.59,642.90 862.55,642.90Z" fill="#daa05d" fill-opacity="0.6" stroke="none" clip-path="url(#clip4)"/><path d="M862.55,636.81 C863.59,636.90 867.41,638.15 869.50,637.42 C871.58,636.69 874.36,632.39 876.44,631.94 C878.53,631.48 881.31,635.29 883.39,634.37 C885.48,633.46 888.25,625.30 890.34,625.85 C892.42,626.40 895.20,638.03 897.28,638.03 C899.37,638.03 902.15,626.94 904.23,625.85 C906.32,624.75 909.09,629.81 911.18,630.72 C913.26,631.63 916.04,631.76 918.13,631.94 C920.21,632.12 922.99,631.57 925.07,631.94 C927.16,632.30 929.94,634.92 932.02,634.37 C934.10,633.83 936.88,627.92 938.97,628.28 C941.05,628.65 943.83,634.80 945.91,636.81 C948.00,638.82 950.78,641.86 952.86,641.68 C954.95,641.50 957.72,637.78 959.81,635.59 C961.89,633.40 964.67,626.15 966.75,627.07 C968.84,627.98 971.62,639.86 973.70,641.68 C975.79,643.51 978.56,641.62 980.65,639.25 C982.73,636.87 985.51,628.04 987.60,625.85 C989.68,623.66 992.46,622.80 994.54,624.63 C996.63,626.46 999.41,636.20 1001.49,638.03 C1003.57,639.86 1006.35,637.91 1008.44,636.81 C1010.52,635.71 1013.30,629.99 1015.38,630.72 C1017.47,631.45 1020.25,640.04 1022.33,641.68 C1024.42,643.33 1027.19,643.51 1029.28,641.68 C1031.36,639.86 1034.14,630.42 1036.22,629.50 C1038.31,628.59 1041.09,635.96 1043.17,635.59 C1045.26,635.23 1048.03,626.88 1050.12,627.07 C1052.20,627.25 1054.98,638.09 1057.07,636.81 C1059.15,635.53 1061.93,619.82 1064.01,618.54 C1066.10,617.26 1068.88,625.54 1070.96,628.28 C1073.04,631.02 1075.82,634.62 1077.91,636.81 C1079.99,639.00 1082.77,643.27 1084.85,642.90 C1086.94,642.53 1089.72,636.20 1091.80,634.37 C1093.89,632.55 1096.66,631.09 1098.75,630.72 C1100.83,630.35 1103.61,630.84 1105.69,631.94 C1107.78,633.03 1110.56,637.06 1112.64,638.03 C1114.73,639.00 1117.50,638.03 1119.59,638.39 C1121.67,638.76 1124.45,640.61 1126.54,640.46 C1128.62,640.32 1131.40,637.42 1133.48,637.42 C1135.57,637.42 1138.35,640.08 1140.43,640.46 C1142.51,640.85 1145.29,642.53 1147.38,639.98 C1149.46,637.42 1152.24,623.80 1154.32,623.41 C1156.41,623.03 1159.19,635.77 1161.27,637.42 C1163.36,639.06 1166.13,634.10 1168.22,634.37 C1170.30,634.65 1173.08,638.33 1175.16,639.25 C1177.25,640.16 1180.03,640.83 1182.11,640.46 C1184.20,640.10 1186.97,636.90 1189.06,636.81 C1191.14,636.72 1193.92,640.17 1196.01,639.86 C1198.09,639.54 1200.87,636.58 1202.95,634.74 C1205.04,632.89 1207.82,626.88 1209.90,627.55 C1211.98,628.23 1214.76,638.22 1216.85,639.25 C1218.93,640.27 1221.71,633.95 1223.79,634.37 C1225.88,634.79 1228.66,643.87 1230.74,642.05 C1232.83,640.22 1235.60,622.80 1237.69,622.19 C1239.77,621.59 1242.55,636.57 1244.63,638.03 C1246.72,639.49 1249.50,632.85 1251.58,631.94 C1253.67,631.02 1256.44,631.66 1258.53,631.94 C1260.61,632.21 1263.39,634.42 1265.48,633.76 C1267.56,633.11 1270.34,627.55 1272.42,627.55 C1274.51,627.55 1277.29,631.83 1279.37,633.76 C1281.45,635.70 1284.23,640.19 1286.32,640.46 C1288.40,640.74 1291.18,636.32 1293.26,635.59 C1295.35,634.86 1298.13,635.87 1300.21,635.59 C1302.30,635.32 1305.07,635.23 1307.16,633.76 C1309.24,632.30 1312.02,626.12 1314.11,625.85 C1316.19,625.57 1318.97,630.48 1321.05,631.94 C1323.14,633.40 1325.91,634.50 1328.00,635.59 C1330.08,636.69 1333.90,638.70 1334.95,639.25" fill="none" stroke="#daa05d" stroke-width="1.4" clip-path="url(#clip4)"/><path d="M862.55,636.81 C863.59,636.81 867.41,637.54 869.50,636.81 C871.58,636.08 874.36,632.30 876.44,631.94 C878.53,631.57 881.31,635.29 883.39,634.37 C885.48,633.46 888.25,625.30 890.34,625.85 C892.42,626.40 895.20,638.03 897.28,638.03 C899.37,638.03 902.15,626.94 904.23,625.85 C906.32,624.75 909.09,629.81 911.18,630.72 C913.26,631.63 916.04,631.76 918.13,631.94 C920.21,632.12 922.99,631.66 925.07,631.94 C927.16,632.21 929.94,634.50 932.02,633.76 C934.10,633.03 936.88,626.79 938.97,627.07 C941.05,627.34 943.83,633.58 945.91,635.59 C948.00,637.60 950.78,644.30 952.86,640.46 C954.95,636.63 957.72,626.82 959.81,610.01 C961.89,593.21 964.67,524.21 966.75,528.41 C968.84,532.61 971.62,621.95 973.70,638.03 C975.79,654.11 978.56,637.60 980.65,635.59 C982.73,633.58 985.51,626.27 987.60,624.63 C989.68,622.99 992.46,623.35 994.54,624.63 C996.63,625.91 999.41,631.33 1001.49,633.16 C1003.57,634.98 1006.35,637.18 1008.44,636.81 C1010.52,636.44 1013.30,629.99 1015.38,630.72 C1017.47,631.45 1020.25,640.04 1022.33,641.68 C1024.42,643.33 1027.19,643.51 1029.28,641.68 C1031.36,639.86 1034.14,630.42 1036.22,629.50 C1038.31,628.59 1041.09,635.96 1043.17,635.59 C1045.26,635.23 1048.03,626.88 1050.12,627.07 C1052.20,627.25 1054.98,638.09 1057.07,636.81 C1059.15,635.53 1061.93,619.82 1064.01,618.54 C1066.10,617.26 1068.88,625.54 1070.96,628.28 C1073.04,631.02 1075.82,634.62 1077.91,636.81 C1079.99,639.00 1082.77,643.27 1084.85,642.90 C1086.94,642.53 1089.72,636.75 1091.80,634.37 C1093.89,632.00 1096.66,628.34 1098.75,627.07 C1100.83,625.79 1103.61,625.30 1105.69,625.85 C1107.78,626.40 1110.56,629.44 1112.64,630.72 C1114.73,632.00 1117.50,633.10 1119.59,634.37 C1121.67,635.65 1124.45,638.88 1126.54,639.25 C1128.62,639.61 1131.40,637.54 1133.48,636.81 C1135.57,636.08 1138.35,634.74 1140.43,634.37 C1142.51,634.01 1145.29,636.02 1147.38,634.37 C1149.46,632.73 1152.24,623.05 1154.32,623.41 C1156.41,623.78 1159.19,637.45 1161.27,636.81 C1163.36,636.17 1166.13,618.97 1168.22,619.15 C1170.30,619.33 1173.08,635.01 1175.16,638.03 C1177.25,641.04 1180.03,639.61 1182.11,639.25 C1184.20,638.88 1186.97,635.59 1189.06,635.59 C1191.14,635.59 1193.92,640.34 1196.01,639.25 C1198.09,638.15 1200.87,630.84 1202.95,628.28 C1205.04,625.73 1207.82,621.10 1209.90,622.19 C1211.98,623.29 1214.76,635.41 1216.85,635.59 C1218.93,635.77 1221.71,623.23 1223.79,623.41 C1225.88,623.59 1228.66,637.91 1230.74,636.81 C1232.83,635.71 1235.60,615.92 1237.69,616.10 C1239.77,616.29 1242.55,635.65 1244.63,638.03 C1246.72,640.40 1249.50,634.31 1251.58,631.94 C1253.67,629.56 1256.44,622.01 1258.53,622.19 C1260.61,622.38 1263.39,632.43 1265.48,633.16 C1267.56,633.89 1270.34,626.97 1272.42,627.07 C1274.51,627.16 1277.29,631.76 1279.37,633.76 C1281.45,635.77 1284.23,640.19 1286.32,640.46 C1288.40,640.74 1291.18,636.32 1293.26,635.59 C1295.35,634.86 1298.13,636.14 1300.21,635.59 C1302.30,635.04 1305.07,634.86 1307.16,631.94 C1309.24,629.01 1312.02,617.93 1314.11,616.10 C1316.19,614.28 1318.97,617.57 1321.05,619.76 C1323.14,621.95 1325.91,628.53 1328.00,630.72 C1330.08,632.91 1333.90,633.83 1334.95,634.37 L1334.95,639.25 C1333.90,638.70 1330.08,636.69 1328.00,635.59 C1325.91,634.50 1323.14,633.40 1321.05,631.94 C1318.97,630.48 1316.19,625.57 1314.11,625.85 C1312.02,626.12 1309.24,632.30 1307.16,633.76 C1305.07,635.23 1302.30,635.32 1300.21,635.59 C1298.13,635.87 1295.35,634.86 1293.26,635.59 C1291.18,636.32 1288.40,640.74 1286.32,640.46 C1284.23,640.19 1281.45,635.70 1279.37,633.76 C1277.29,631.83 1274.51,627.55 1272.42,627.55 C1270.34,627.55 1267.56,633.11 1265.48,633.76 C1263.39,634.42 1260.61,632.21 1258.53,631.94 C1256.44,631.66 1253.67,631.02 1251.58,631.94 C1249.50,632.85 1246.72,639.49 1244.63,638.03 C1242.55,636.57 1239.77,621.59 1237.69,622.19 C1235.60,622.80 1232.83,640.22 1230.74,642.05 C1228.66,643.87 1225.88,634.79 1223.79,634.37 C1221.71,633.95 1218.93,640.27 1216.85,639.25 C1214.76,638.22 1211.98,628.23 1209.90,627.55 C1207.82,626.88 1205.04,632.89 1202.95,634.74 C1200.87,636.58 1198.09,639.54 1196.01,639.86 C1193.92,640.17 1191.14,636.72 1189.06,636.81 C1186.97,636.90 1184.20,640.10 1182.11,640.46 C1180.03,640.83 1177.25,640.16 1175.16,639.25 C1173.08,638.33 1170.30,634.65 1168.22,634.37 C1166.13,634.10 1163.36,639.06 1161.27,637.42 C1159.19,635.77 1156.41,623.03 1154.32,623.41 C1152.24,623.80 1149.46,637.42 1147.38,639.98 C1145.29,642.53 1142.51,640.85 1140.43,640.46 C1138.35,640.08 1135.57,637.42 1133.48,637.42 C1131.40,637.42 1128.62,640.32 1126.54,640.46 C1124.45,640.61 1121.67,638.76 1119.59,638.39 C1117.50,638.03 1114.73,639.00 1112.64,638.03 C1110.56,637.06 1107.78,633.03 1105.69,631.94 C1103.61,630.84 1100.83,630.35 1098.75,630.72 C1096.66,631.09 1093.89,632.55 1091.80,634.37 C1089.72,636.20 1086.94,642.53 1084.85,642.90 C1082.77,643.27 1079.99,639.00 1077.91,636.81 C1075.82,634.62 1073.04,631.02 1070.96,628.28 C1068.88,625.54 1066.10,617.26 1064.01,618.54 C1061.93,619.82 1059.15,635.53 1057.07,636.81 C1054.98,638.09 1052.20,627.25 1050.12,627.07 C1048.03,626.88 1045.26,635.23 1043.17,635.59 C1041.09,635.96 1038.31,628.59 1036.22,629.50 C1034.14,630.42 1031.36,639.86 1029.28,641.68 C1027.19,643.51 1024.42,643.33 1022.33,641.68 C1020.25,640.04 1017.47,631.45 1015.38,630.72 C1013.30,629.99 1010.52,635.71 1008.44,636.81 C1006.35,637.91 1003.57,639.86 1001.49,638.03 C999.41,636.20 996.63,626.46 994.54,624.63 C992.46,622.80 989.68,623.66 987.60,625.85 C985.51,628.04 982.73,636.87 980.65,639.25 C978.56,641.62 975.79,643.51 973.70,641.68 C971.62,639.86 968.84,627.98 966.75,627.07 C964.67,626.15 961.89,633.40 959.81,635.59 C957.72,637.78 954.95,641.50 952.86,641.68 C950.78,641.86 948.00,638.82 945.91,636.81 C943.83,634.80 941.05,628.65 938.97,628.28 C936.88,627.92 934.10,633.83 932.02,634.37 C929.94,634.92 927.16,632.30 925.07,631.94 C922.99,631.57 920.21,632.12 918.13,631.94 C916.04,631.76 913.26,631.63 911.18,630.72 C909.09,629.81 906.32,624.75 904.23,625.85 C902.15,626.94 899.37,638.03 897.28,638.03 C895.20,638.03 892.42,626.40 890.34,625.85 C888.25,625.30 885.48,633.46 883.39,634.37 C881.31,635.29 878.53,631.48 876.44,631.94 C874.36,632.39 871.58,636.69 869.50,637.42 C867.41,638.15 863.59,636.90 862.55,636.81Z" fill="#bfae40" fill-opacity="0.6" stroke="none" clip-path="url(#clip4)"/><path d="M862.55,636.81 C863.59,636.81 867.41,637.54 869.50,636.81 C871.58,636.08 874.36,632.30 876.44,631.94 C878.53,631.57 881.31,635.29 883.39,634.37 C885.48,633.46 888.25,625.30 890.34,625.85 C892.42,626.40 895.20,638.03 897.28,638.03 C899.37,638.03 902.15,626.94 904.23,625.85 C906.32,624.75 909.09,629.81 911.18,630.72 C913.26,631.63 916.04,631.76 918.13,631.94 C920.21,632.12 922.99,631.66 925.07,631.94 C927.16,632.21 929.94,634.50 932.02,633.76 C934.10,633.03 936.88,626.79 938.97,627.07 C941.05,627.34 943.83,633.58 945.91,635.59 C948.00,637.60 950.78,644.30 952.86,640.46 C954.95,636.63 957.72,626.82 959.81,610.01 C961.89,593.21 964.67,524.21 966.75,528.41 C968.84,532.61 971.62,621.95 973.70,638.03 C975.79,654.11 978.56,637.60 980.65,635.59 C982.73,633.58 985.51,626.27 987.60,624.63 C989.68,622.99 992.46,623.35 994.54,624.63 C996.63,625.91 999.41,631.33 1001.49,633.16 C1003.57,634.98 1006.35,637.18 1008.44,636.81 C1010.52,636.44 1013.30,629.99 1015.38,630.72 C1017.47,631.45 1020.25,640.04 1022.33,641.68 C1024.42,643.33 1027.19,643.51 1029.28,641.68 C1031.36,639.86 1034.14,630.42 1036.22,629.50 C1038.31,628.59 1041.09,635.96 1043.17,635.59 C1045.26,635.23 1048.03,626.88 1050.12,627.07 C1052.20,627.25 1054.98,638.09 1057.07,636.81 C1059.15,635.53 1061.93,619.82 1064.01,618.54 C1066.10,617.26 1068.88,625.54 1070.96,628.28 C1073.04,631.02 1075.82,634.62 1077.91,636.81 C1079.99,639.00 1082.77,643.27 1084.85,642.90 C1086.94,642.53 1089.72,636.75 1091.80,634.37 C1093.89,632.00 1096.66,628.34 1098.75,627.07 C1100.83,625.79 1103.61,625.30 1105.69,625.85 C1107.78,626.40 1110.56,629.44 1112.64,630.72 C1114.73,632.00 1117.50,633.10 1119.59,634.37 C1121.67,635.65 1124.45,638.88 1126.54,639.25 C1128.62,639.61 1131.40,637.54 1133.48,636.81 C1135.57,636.08 1138.35,634.74 1140.43,634.37 C1142.51,634.01 1145.29,636.02 1147.38,634.37 C1149.46,632.73 1152.24,623.05 1154.32,623.41 C1156.41,623.78 1159.19,637.45 1161.27,636.81 C1163.36,636.17 1166.13,618.97 1168.22,619.15 C1170.30,619.33 1173.08,635.01 1175.16,638.03 C1177.25,641.04 1180.03,639.61 1182.11,639.25 C1184.20,638.88 1186.97,635.59 1189.06,635.59 C1191.14,635.59 1193.92,640.34 1196.01,639.25 C1198.09,638.15 1200.87,630.84 1202.95,628.28 C1205.04,625.73 1207.82,621.10 1209.90,622.19 C1211.98,623.29 1214.76,635.41 1216.85,635.59 C1218.93,635.77 1221.71,623.23 1223.79,623.41 C1225.88,623.59 1228.66,637.91 1230.74,636.81 C1232.83,635.71 1235.60,615.92 1237.69,616.10 C1239.77,616.29 1242.55,635.65 1244.63,638.03 C1246.72,640.40 1249.50,634.31 1251.58,631.94 C1253.67,629.56 1256.44,622.01 1258.53,622.19 C1260.61,622.38 1263.39,632.43 1265.48,633.16 C1267.56,633.89 1270.34,626.97 1272.42,627.07 C1274.51,627.16 1277.29,631.76 1279.37,633.76 C1281.45,635.77 1284.23,640.19 1286.32,640.46 C1288.40,640.74 1291.18,636.32 1293.26,635.59 C1295.35,634.86 1298.13,636.14 1300.21,635.59 C1302.30,635.04 1305.07,634.86 1307.16,631.94 C1309.24,629.01 1312.02,617.93 1314.11,616.10 C1316.19,614.28 1318.97,617.57 1321.05,619.76 C1323.14,621.95 1325.91,628.53 1328.00,630.72 C1330.08,632.91 1333.90,633.83 1334.95,634.37" fill="none" stroke="#bfae40" stroke-width="1.4" clip-path="url(#clip4)"/><path d="M862.55,636.81 C863.59,636.81 867.41,637.54 869.50,636.81 C871.58,636.08 874.36,632.30 876.44,631.94 C878.53,631.57 881.31,635.29 883.39,634.37 C885.48,633.46 888.25,625.30 890.34,625.85 C892.42,626.40 895.20,638.03 897.28,638.03 C899.37,638.03 902.15,626.94 904.23,625.85 C906.32,624.75 909.09,629.81 911.18,630.72 C913.26,631.63 916.04,631.76 918.13,631.94 C920.21,632.12 922.99,631.66 925.07,631.94 C927.16,632.21 929.94,634.50 932.02,633.76 C934.10,633.03 936.88,626.79 938.97,627.07 C941.05,627.34 943.83,633.58 945.91,635.59 C948.00,637.60 950.78,644.30 952.86,640.46 C954.95,636.63 957.72,626.82 959.81,610.01 C961.89,593.21 964.67,524.21 966.75,528.41 C968.84,532.61 971.62,621.95 973.70,638.03 C975.79,654.11 978.56,637.60 980.65,635.59 C982.73,633.58 985.51,626.27 987.60,624.63 C989.68,622.99 992.46,623.35 994.54,624.63 C996.63,625.91 999.41,631.33 1001.49,633.16 C1003.57,634.98 1006.35,637.18 1008.44,636.81 C1010.52,636.44 1013.30,629.99 1015.38,630.72 C1017.47,631.45 1020.25,640.04 1022.33,641.68 C1024.42,643.33 1027.19,643.51 1029.28,641.68 C1031.36,639.86 1034.14,630.42 1036.22,629.50 C1038.31,628.59 1041.09,635.96 1043.17,635.59 C1045.26,635.23 1048.03,626.88 1050.12,627.07 C1052.20,627.25 1054.98,638.09 1057.07,636.81 C1059.15,635.53 1061.93,619.82 1064.01,618.54 C1066.10,617.26 1068.88,625.54 1070.96,628.28 C1073.04,631.02 1075.82,638.82 1077.91,636.81 C1079.99,634.80 1082.77,615.34 1084.85,614.89 C1086.94,614.43 1089.72,631.94 1091.80,633.76 C1093.89,635.59 1096.66,628.25 1098.75,627.07 C1100.83,625.88 1103.61,625.30 1105.69,625.85 C1107.78,626.40 1110.56,629.44 1112.64,630.72 C1114.73,632.00 1117.50,633.10 1119.59,634.37 C1121.67,635.65 1124.45,638.88 1126.54,639.25 C1128.62,639.61 1131.40,637.54 1133.48,636.81 C1135.57,636.08 1138.35,634.74 1140.43,634.37 C1142.51,634.01 1145.29,636.02 1147.38,634.37 C1149.46,632.73 1152.24,623.05 1154.32,623.41 C1156.41,623.78 1159.19,637.45 1161.27,636.81 C1163.36,636.17 1166.13,618.97 1168.22,619.15 C1170.30,619.33 1173.08,635.01 1175.16,638.03 C1177.25,641.04 1180.03,639.61 1182.11,639.25 C1184.20,638.88 1186.97,635.59 1189.06,635.59 C1191.14,635.59 1193.92,640.34 1196.01,639.25 C1198.09,638.15 1200.87,630.84 1202.95,628.28 C1205.04,625.73 1207.82,621.10 1209.90,622.19 C1211.98,623.29 1214.76,635.41 1216.85,635.59 C1218.93,635.77 1221.71,623.23 1223.79,623.41 C1225.88,623.59 1228.66,637.91 1230.74,636.81 C1232.83,635.71 1235.60,615.92 1237.69,616.10 C1239.77,616.29 1242.55,635.65 1244.63,638.03 C1246.72,640.40 1249.50,634.31 1251.58,631.94 C1253.67,629.56 1256.44,622.01 1258.53,622.19 C1260.61,622.38 1263.39,632.43 1265.48,633.16 C1267.56,633.89 1270.34,626.97 1272.42,627.07 C1274.51,627.16 1277.29,631.76 1279.37,633.76 C1281.45,635.77 1284.23,640.19 1286.32,640.46 C1288.40,640.74 1291.18,636.32 1293.26,635.59 C1295.35,634.86 1298.13,636.14 1300.21,635.59 C1302.30,635.04 1305.07,634.86 1307.16,631.94 C1309.24,629.01 1312.02,617.93 1314.11,616.10 C1316.19,614.28 1318.97,617.57 1321.05,619.76 C1323.14,621.95 1325.91,628.53 1328.00,630.72 C1330.08,632.91 1333.90,633.83 1334.95,634.37 L1334.95,634.37 C1333.90,633.83 1330.08,632.91 1328.00,630.72 C1325.91,628.53 1323.14,621.95 1321.05,619.76 C1318.97,617.57 1316.19,614.28 1314.11,616.10 C1312.02,617.93 1309.24,629.01 1307.16,631.94 C1305.07,634.86 1302.30,635.04 1300.21,635.59 C1298.13,636.14 1295.35,634.86 1293.26,635.59 C1291.18,636.32 1288.40,640.74 1286.32,640.46 C1284.23,640.19 1281.45,635.77 1279.37,633.76 C1277.29,631.76 1274.51,627.16 1272.42,627.07 C1270.34,626.97 1267.56,633.89 1265.48,633.16 C1263.39,632.43 1260.61,622.38 1258.53,622.19 C1256.44,622.01 1253.67,629.56 1251.58,631.94 C1249.50,634.31 1246.72,640.40 1244.63,638.03 C1242.55,635.65 1239.77,616.29 1237.69,616.10 C1235.60,615.92 1232.83,635.71 1230.74,636.81 C1228.66,637.91 1225.88,623.59 1223.79,623.41 C1221.71,623.23 1218.93,635.77 1216.85,635.59 C1214.76,635.41 1211.98,623.29 1209.90,622.19 C1207.82,621.10 1205.04,625.73 1202.95,628.28 C1200.87,630.84 1198.09,638.15 1196.01,639.25 C1193.92,640.34 1191.14,635.59 1189.06,635.59 C1186.97,635.59 1184.20,638.88 1182.11,639.25 C1180.03,639.61 1177.25,641.04 1175.16,638.03 C1173.08,635.01 1170.30,619.33 1168.22,619.15 C1166.13,618.97 1163.36,636.17 1161.27,636.81 C1159.19,637.45 1156.41,623.78 1154.32,623.41 C1152.24,623.05 1149.46,632.73 1147.38,634.37 C1145.29,636.02 1142.51,634.01 1140.43,634.37 C1138.35,634.74 1135.57,636.08 1133.48,636.81 C1131.40,637.54 1128.62,639.61 1126.54,639.25 C1124.45,638.88 1121.67,635.65 1119.59,634.37 C1117.50,633.10 1114.73,632.00 1112.64,630.72 C1110.56,629.44 1107.78,626.40 1105.69,625.85 C1103.61,625.30 1100.83,625.79 1098.75,627.07 C1096.66,628.34 1093.89,632.00 1091.80,634.37 C1089.72,636.75 1086.94,642.53 1084.85,642.90 C1082.77,643.27 1079.99,639.00 1077.91,636.81 C1075.82,634.62 1073.04,631.02 1070.96,628.28 C1068.88,625.54 1066.10,617.26 1064.01,618.54 C1061.93,619.82 1059.15,635.53 1057.07,636.81 C1054.98,638.09 1052.20,627.25 1050.12,627.07 C1048.03,626.88 1045.26,635.23 1043.17,635.59 C1041.09,635.96 1038.31,628.59 1036.22,629.50 C1034.14,630.42 1031.36,639.86 1029.28,641.68 C1027.19,643.51 1024.42,643.33 1022.33,641.68 C1020.25,640.04 1017.47,631.45 1015.38,630.72 C1013.30,629.99 1010.52,636.44 1008.44,636.81 C1006.35,637.18 1003.57,634.98 1001.49,633.16 C999.41,631.33 996.63,625.91 994.54,624.63 C992.46,623.35 989.68,622.99 987.60,624.63 C985.51,626.27 982.73,633.58 980.65,635.59 C978.56,637.60 975.79,654.11 973.70,638.03 C971.62,621.95 968.84,532.61 966.75,528.41 C964.67,524.21 961.89,593.21 959.81,610.01 C957.72,626.82 954.95,636.63 952.86,640.46 C950.78,644.30 948.00,637.60 945.91,635.59 C943.83,633.58 941.05,627.34 938.97,627.07 C936.88,626.79 934.10,633.03 932.02,633.76 C929.94,634.50 927.16,632.21 925.07,631.94 C922.99,631.66 920.21,632.12 918.13,631.94 C916.04,631.76 913.26,631.63 911.18,630.72 C909.09,629.81 906.32,624.75 904.23,625.85 C902.15,626.94 899.37,638.03 897.28,638.03 C895.20,638.03 892.42,626.40 890.34,625.85 C888.25,625.30 885.48,633.46 883.39,634.37 C881.31,635.29 878.53,631.57 876.44,631.94 C874.36,632.30 871.58,636.08 869.50,636.81 C867.41,637.54 863.59,636.81 862.55,636.81Z" fill="#444ec6" fill-opacity="0.6" stroke="none" clip-path="url(#clip4)"/><path d="M862.55,636.81 C863.59,636.81 867.41,637.54 869.50,636.81 C871.58,636.08 874.36,632.30 876.44,631.94 C878.53,631.57 881.31,635.29 883.39,634.37 C885.48,633.46 888.25,625.30 890.34,625.85 C892.42,626.40 895.20,638.03 897.28,638.03 C899.37,638.03 902.15,626.94 904.23,625.85 C906.32,624.75 909.09,629.81 911.18,630.72 C913.26,631.63 916.04,631.76 918.13,631.94 C920.21,632.12 922.99,631.66 925.07,631.94 C927.16,632.21 929.94,634.50 932.02,633.76 C934.10,633.03 936.88,626.79 938.97,627.07 C941.05,627.34 943.83,633.58 945.91,635.59 C948.00,637.60 950.78,644.30 952.86,640.46 C954.95,636.63 957.72,626.82 959.81,610.01 C961.89,593.21 964.67,524.21 966.75,528.41 C968.84,532.61 971.62,621.95 973.70,638.03 C975.79,654.11 978.56,637.60 980.65,635.59 C982.73,633.58 985.51,626.27 987.60,624.63 C989.68,622.99 992.46,623.35 994.54,624.63 C996.63,625.91 999.41,631.33 1001.49,633.16 C1003.57,634.98 1006.35,637.18 1008.44,636.81 C1010.52,636.44 1013.30,629.99 1015.38,630.72 C1017.47,631.45 1020.25,640.04 1022.33,641.68 C1024.42,643.33 1027.19,643.51 1029.28,641.68 C1031.36,639.86 1034.14,630.42 1036.22,629.50 C1038.31,628.59 1041.09,635.96 1043.17,635.59 C1045.26,635.23 1048.03,626.88 1050.12,627.07 C1052.20,627.25 1054.98,638.09 1057.07,636.81 C1059.15,635.53 1061.93,619.82 1064.01,618.54 C1066.10,617.26 1068.88,625.54 1070.96,628.28 C1073.04,631.02 1075.82,638.82 1077.91,636.81 C1079.99,634.80 1082.77,615.34 1084.85,614.89 C1086.94,614.43 1089.72,631.94 1091.80,633.76 C1093.89,635.59 1096.66,628.25 1098.75,627.07 C1100.83,625.88 1103.61,625.30 1105.69,625.85 C1107.78,626.40 1110.56,629.44 1112.64,630.72 C1114.73,632.00 1117.50,633.10 1119.59,634.37 C1121.67,635.65 1124.45,638.88 1126.54,639.25 C1128.62,639.61 1131.40,637.54 1133.48,636.81 C1135.57,636.08 1138.35,634.74 1140.43,634.37 C1142.51,634.01 1145.29,636.02 1147.38,634.37 C1149.46,632.73 1152.24,623.05 1154.32,623.41 C1156.41,623.78 1159.19,637.45 1161.27,636.81 C1163.36,636.17 1166.13,618.97 1168.22,619.15 C1170.30,619.33 1173.08,635.01 1175.16,638.03 C1177.25,641.04 1180.03,639.61 1182.11,639.25 C1184.20,638.88 1186.97,635.59 1189.06,635.59 C1191.14,635.59 1193.92,640.34 1196.01,639.25 C1198.09,638.15 1200.87,630.84 1202.95,628.28 C1205.04,625.73 1207.82,621.10 1209.90,622.19 C1211.98,623.29 1214.76,635.41 1216.85,635.59 C1218.93,635.77 1221.71,623.23 1223.79,623.41 C1225.88,623.59 1228.66,637.91 1230.74,636.81 C1232.83,635.71 1235.60,615.92 1237.69,616.10 C1239.77,616.29 1242.55,635.65 1244.63,638.03 C1246.72,640.40 1249.50,634.31 1251.58,631.94 C1253.67,629.56 1256.44,622.01 1258.53,622.19 C1260.61,622.38 1263.39,632.43 1265.48,633.16 C1267.56,633.89 1270.34,626.97 1272.42,627.07 C1274.51,627.16 1277.29,631.76 1279.37,633.76 C1281.45,635.77 1284.23,640.19 1286.32,640.46 C1288.40,640.74 1291.18,636.32 1293.26,635.59 C1295.35,634.86 1298.13,636.14 1300.21,635.59 C1302.30,635.04 1305.07,634.86 1307.16,631.94 C1309.24,629.01 1312.02,617.93 1314.11,616.10 C1316.19,614.28 1318.97,617.57 1321.05,619.76 C1323.14,621.95 1325.91,628.53 1328.00,630.72 C1330.08,632.91 1333.90,633.83 1334.95,634.37" fill="none" stroke="#444ec6" stroke-width="1.4" clip-path="url(#clip4)"/><path d="M862.55,636.81 C863.59,636.81 867.41,637.54 869.50,636.81 C871.58,636.08 874.36,632.30 876.44,631.94 C878.53,631.57 881.31,635.29 883.39,634.37 C885.48,633.46 888.25,625.30 890.34,625.85 C892.42,626.40 895.20,638.03 897.28,638.03 C899.37,638.03 902.15,626.94 904.23,625.85 C906.32,624.75 909.09,629.81 911.18,630.72 C913.26,631.63 916.04,631.76 918.13,631.94 C920.21,632.12 922.99,631.76 925.07,631.94 C927.16,632.12 929.94,634.25 932.02,633.16 C934.10,632.06 936.88,624.26 938.97,624.63 C941.05,625.00 943.83,633.22 945.91,635.59 C948.00,637.97 950.78,644.30 952.86,640.46 C954.95,636.63 957.72,626.82 959.81,610.01 C961.89,593.21 964.67,524.21 966.75,528.41 C968.84,532.61 971.62,621.95 973.70,638.03 C975.79,654.11 978.56,637.60 980.65,635.59 C982.73,633.58 985.51,626.27 987.60,624.63 C989.68,622.99 992.46,623.35 994.54,624.63 C996.63,625.91 999.41,631.33 1001.49,633.16 C1003.57,634.98 1006.35,637.18 1008.44,636.81 C1010.52,636.44 1013.30,629.99 1015.38,630.72 C1017.47,631.45 1020.25,640.04 1022.33,641.68 C1024.42,643.33 1027.19,643.51 1029.28,641.68 C1031.36,639.86 1034.14,630.42 1036.22,629.50 C1038.31,628.59 1041.09,635.96 1043.17,635.59 C1045.26,635.23 1048.03,626.88 1050.12,627.07 C1052.20,627.25 1054.98,638.45 1057.07,636.81 C1059.15,635.17 1061.93,617.38 1064.01,616.10 C1066.10,614.83 1068.88,625.18 1070.96,628.28 C1073.04,631.39 1075.82,638.82 1077.91,636.81 C1079.99,634.80 1082.77,615.34 1084.85,614.89 C1086.94,614.43 1089.72,631.94 1091.80,633.76 C1093.89,635.59 1096.66,628.25 1098.75,627.07 C1100.83,625.88 1103.61,625.30 1105.69,625.85 C1107.78,626.40 1110.56,629.44 1112.64,630.72 C1114.73,632.00 1117.50,633.28 1119.59,634.37 C1121.67,635.47 1124.45,637.66 1126.54,638.03 C1128.62,638.39 1131.40,637.36 1133.48,636.81 C1135.57,636.26 1138.35,634.74 1140.43,634.37 C1142.51,634.01 1145.29,636.02 1147.38,634.37 C1149.46,632.73 1152.24,623.05 1154.32,623.41 C1156.41,623.78 1159.19,638.27 1161.27,636.81 C1163.36,635.35 1166.13,613.49 1168.22,613.67 C1170.30,613.85 1173.08,634.19 1175.16,638.03 C1177.25,641.86 1180.03,640.16 1182.11,639.25 C1184.20,638.33 1186.97,631.94 1189.06,631.94 C1191.14,631.94 1193.92,639.79 1196.01,639.25 C1198.09,638.70 1200.87,630.84 1202.95,628.28 C1205.04,625.73 1207.82,621.10 1209.90,622.19 C1211.98,623.29 1214.76,635.41 1216.85,635.59 C1218.93,635.77 1221.71,623.23 1223.79,623.41 C1225.88,623.59 1228.66,637.91 1230.74,636.81 C1232.83,635.71 1235.60,615.92 1237.69,616.10 C1239.77,616.29 1242.55,635.65 1244.63,638.03 C1246.72,640.40 1249.50,634.50 1251.58,631.94 C1253.67,629.38 1256.44,620.79 1258.53,620.98 C1260.61,621.16 1263.39,632.24 1265.48,633.16 C1267.56,634.07 1270.34,626.97 1272.42,627.07 C1274.51,627.16 1277.29,631.76 1279.37,633.76 C1281.45,635.77 1284.23,640.19 1286.32,640.46 C1288.40,640.74 1291.18,636.32 1293.26,635.59 C1295.35,634.86 1298.13,636.14 1300.21,635.59 C1302.30,635.04 1305.07,635.23 1307.16,631.94 C1309.24,628.65 1312.02,615.50 1314.11,613.67 C1316.19,611.84 1318.97,617.20 1321.05,619.76 C1323.14,622.32 1325.91,628.53 1328.00,630.72 C1330.08,632.91 1333.90,633.83 1334.95,634.37 L1334.95,634.37 C1333.90,633.83 1330.08,632.91 1328.00,630.72 C1325.91,628.53 1323.14,621.95 1321.05,619.76 C1318.97,617.57 1316.19,614.28 1314.11,616.10 C1312.02,617.93 1309.24,629.01 1307.16,631.94 C1305.07,634.86 1302.30,635.04 1300.21,635.59 C1298.13,636.14 1295.35,634.86 1293.26,635.59 C1291.18,636.32 1288.40,640.74 1286.32,640.46 C1284.23,640.19 1281.45,635.77 1279.37,633.76 C1277.29,631.76 1274.51,627.16 1272.42,627.07 C1270.34,626.97 1267.56,633.89 1265.48,633.16 C1263.39,632.43 1260.61,622.38 1258.53,622.19 C1256.44,622.01 1253.67,629.56 1251.58,631.94 C1249.50,634.31 1246.72,640.40 1244.63,638.03 C1242.55,635.65 1239.77,616.29 1237.69,616.10 C1235.60,615.92 1232.83,635.71 1230.74,636.81 C1228.66,637.91 1225.88,623.59 1223.79,623.41 C1221.71,623.23 1218.93,635.77 1216.85,635.59 C1214.76,635.41 1211.98,623.29 1209.90,622.19 C1207.82,621.10 1205.04,625.73 1202.95,628.28 C1200.87,630.84 1198.09,638.15 1196.01,639.25 C1193.92,640.34 1191.14,635.59 1189.06,635.59 C1186.97,635.59 1184.20,638.88 1182.11,639.25 C1180.03,639.61 1177.25,641.04 1175.16,638.03 C1173.08,635.01 1170.30,619.33 1168.22,619.15 C1166.13,618.97 1163.36,636.17 1161.27,636.81 C1159.19,637.45 1156.41,623.78 1154.32,623.41 C1152.24,623.05 1149.46,632.73 1147.38,634.37 C1145.29,636.02 1142.51,634.01 1140.43,634.37 C1138.35,634.74 1135.57,636.08 1133.48,636.81 C1131.40,637.54 1128.62,639.61 1126.54,639.25 C1124.45,638.88 1121.67,635.65 1119.59,634.37 C1117.50,633.10 1114.73,632.00 1112.64,630.72 C1110.56,629.44 1107.78,626.40 1105.69,625.85 C1103.61,625.30 1100.83,625.88 1098.75,627.07 C1096.66,628.25 1093.89,635.59 1091.80,633.76 C1089.72,631.94 1086.94,614.43 1084.85,614.89 C1082.77,615.34 1079.99,634.80 1077.91,636.81 C1075.82,638.82 1073.04,631.02 1070.96,628.28 C1068.88,625.54 1066.10,617.26 1064.01,618.54 C1061.93,619.82 1059.15,635.53 1057.07,636.81 C1054.98,638.09 1052.20,627.25 1050.12,627.07 C1048.03,626.88 1045.26,635.23 1043.17,635.59 C1041.09,635.96 1038.31,628.59 1036.22,629.50 C1034.14,630.42 1031.36,639.86 1029.28,641.68 C1027.19,643.51 1024.42,643.33 1022.33,641.68 C1020.25,640.04 1017.47,631.45 1015.38,630.72 C1013.30,629.99 1010.52,636.44 1008.44,636.81 C1006.35,637.18 1003.57,634.98 1001.49,633.16 C999.41,631.33 996.63,625.91 994.54,624.63 C992.46,623.35 989.68,622.99 987.60,624.63 C985.51,626.27 982.73,633.58 980.65,635.59 C978.56,637.60 975.79,654.11 973.70,638.03 C971.62,621.95 968.84,532.61 966.75,528.41 C964.67,524.21 961.89,593.21 959.81,610.01 C957.72,626.82 954.95,636.63 952.86,640.46 C950.78,644.30 948.00,637.60 945.91,635.59 C943.83,633.58 941.05,627.34 938.97,627.07 C936.88,626.79 934.10,633.03 932.02,633.76 C929.94,634.50 927.16,632.21 925.07,631.94 C922.99,631.66 920.21,632.12 918.13,631.94 C916.04,631.76 913.26,631.63 911.18,630.72 C909.09,629.81 906.32,624.75 904.23,625.85 C902.15,626.94 899.37,638.03 897.28,638.03 C895.20,638.03 892.42,626.40 890.34,625.85 C888.25,625.30 885.48,633.46 883.39,634.37 C881.31,635.29 878.53,631.57 876.44,631.94 C874.36,632.30 871.58,636.08 869.50,636.81 C867.41,637.54 863.59,636.81 862.55,636.81Z" fill="#c4503f" fill-opacity="0.6" stroke="none" clip-path="url(#clip4)"/><path d="M862.55,636.81 C863.59,636.81 867.41,637.54 869.50,636.81 C871.58,636.08 874.36,632.30 876.44,631.94 C878.53,631.57 881.31,635.29 883.39,634.37 C885.48,633.46 888.25,625.30 890.34,625.85 C892.42,626.40 895.20,638.03 897.28,638.03 C899.37,638.03 902.15,626.94 904.23,625.85 C906.32,624.75 909.09,629.81 911.18,630.72 C913.26,631.63 916.04,631.76 918.13,631.94 C920.21,632.12 922.99,631.76 925.07,631.94 C927.16,632.12 929.94,634.25 932.02,633.16 C934.10,632.06 936.88,624.26 938.97,624.63 C941.05,625.00 943.83,633.22 945.91,635.59 C948.00,637.97 950.78,644.30 952.86,640.46 C954.95,636.63 957.72,626.82 959.81,610.01 C961.89,593.21 964.67,524.21 966.75,528.41 C968.84,532.61 971.62,621.95 973.70,638.03 C975.79,654.11 978.56,637.60 980.65,635.59 C982.73,633.58 985.51,626.27 987.60,624.63 C989.68,622.99 992.46,623.35 994.54,624.63 C996.63,625.91 999.41,631.33 1001.49,633.16 C1003.57,634.98 1006.35,637.18 1008.44,636.81 C1010.52,636.44 1013.30,629.99 1015.38,630.72 C1017.47,631.45 1020.25,640.04 1022.33,641.68 C1024.42,643.33 1027.19,643.51 1029.28,641.68 C1031.36,639.86 1034.14,630.42 1036.22,629.50 C1038.31,628.59 1041.09,635.96 1043.17,635.59 C1045.26,635.23 1048.03,626.88 1050.12,627.07 C1052.20,627.25 1054.98,638.45 1057.07,636.81 C1059.15,635.17 1061.93,617.38 1064.01,616.10 C1066.10,614.83 1068.88,625.18 1070.96,628.28 C1073.04,631.39 1075.82,638.82 1077.91,636.81 C1079.99,634.80 1082.77,615.34 1084.85,614.89 C1086.94,614.43 1089.72,631.94 1091.80,633.76 C1093.89,635.59 1096.66,628.25 1098.75,627.07 C1100.83,625.88 1103.61,625.30 1105.69,625.85 C1107.78,626.40 1110.56,629.44 1112.64,630.72 C1114.73,632.00 1117.50,633.28 1119.59,634.37 C1121.67,635.47 1124.45,637.66 1126.54,638.03 C1128.62,638.39 1131.40,637.36 1133.48,636.81 C1135.57,636.26 1138.35,634.74 1140.43,634.37 C1142.51,634.01 1145.29,636.02 1147.38,634.37 C1149.46,632.73 1152.24,623.05 1154.32,623.41 C1156.41,623.78 1159.19,638.27 1161.27,636.81 C1163.36,635.35 1166.13,613.49 1168.22,613.67 C1170.30,613.85 1173.08,634.19 1175.16,638.03 C1177.25,641.86 1180.03,640.16 1182.11,639.25 C1184.20,638.33 1186.97,631.94 1189.06,631.94 C1191.14,631.94 1193.92,639.79 1196.01,639.25 C1198.09,638.70 1200.87,630.84 1202.95,628.28 C1205.04,625.73 1207.82,621.10 1209.90,622.19 C1211.98,623.29 1214.76,635.41 1216.85,635.59 C1218.93,635.77 1221.71,623.23 1223.79,623.41 C1225.88,623.59 1228.66,637.91 1230.74,636.81 C1232.83,635.71 1235.60,615.92 1237.69,616.10 C1239.77,616.29 1242.55,635.65 1244.63,638.03 C1246.72,640.40 1249.50,634.50 1251.58,631.94 C1253.67,629.38 1256.44,620.79 1258.53,620.98 C1260.61,621.16 1263.39,632.24 1265.48,633.16 C1267.56,634.07 1270.34,626.97 1272.42,627.07 C1274.51,627.16 1277.29,631.76 1279.37,633.76 C1281.45,635.77 1284.23,640.19 1286.32,640.46 C1288.40,640.74 1291.18,636.32 1293.26,635.59 C1295.35,634.86 1298.13,636.14 1300.21,635.59 C1302.30,635.04 1305.07,635.23 1307.16,631.94 C1309.24,628.65 1312.02,615.50 1314.11,613.67 C1316.19,611.84 1318.97,617.20 1321.05,619.76 C1323.14,622.32 1325.91,628.53 1328.00,630.72 C1330.08,632.91 1333.90,633.83 1334.95,634.37" fill="none" stroke="#c4503f" stroke-width="1.4" clip-path="url(#clip4)"/><path d="M862.55,635.59 C863.59,635.77 867.41,638.45 869.50,636.81 C871.58,635.17 874.36,625.00 876.44,624.63 C878.53,624.26 881.31,634.19 883.39,634.37 C885.48,634.56 888.25,625.30 890.34,625.85 C892.42,626.40 895.20,638.03 897.28,638.03 C899.37,638.03 902.15,626.94 904.23,625.85 C906.32,624.75 909.09,629.81 911.18,630.72 C913.26,631.63 916.04,631.76 918.13,631.94 C920.21,632.12 922.99,631.76 925.07,631.94 C927.16,632.12 929.94,634.25 932.02,633.16 C934.10,632.06 936.88,624.26 938.97,624.63 C941.05,625.00 943.83,633.22 945.91,635.59 C948.00,637.97 950.78,644.30 952.86,640.46 C954.95,636.63 957.72,626.82 959.81,610.01 C961.89,593.21 964.67,524.21 966.75,528.41 C968.84,532.61 971.62,621.95 973.70,638.03 C975.79,654.11 978.56,637.60 980.65,635.59 C982.73,633.58 985.51,626.27 987.60,624.63 C989.68,622.99 992.46,623.35 994.54,624.63 C996.63,625.91 999.41,631.33 1001.49,633.16 C1003.57,634.98 1006.35,637.18 1008.44,636.81 C1010.52,636.44 1013.30,629.99 1015.38,630.72 C1017.47,631.45 1020.25,640.04 1022.33,641.68 C1024.42,643.33 1027.19,643.51 1029.28,641.68 C1031.36,639.86 1034.14,630.42 1036.22,629.50 C1038.31,628.59 1041.09,635.96 1043.17,635.59 C1045.26,635.23 1048.03,626.88 1050.12,627.07 C1052.20,627.25 1054.98,638.45 1057.07,636.81 C1059.15,635.17 1061.93,617.38 1064.01,616.10 C1066.10,614.83 1068.88,625.18 1070.96,628.28 C1073.04,631.39 1075.82,638.82 1077.91,636.81 C1079.99,634.80 1082.77,615.34 1084.85,614.89 C1086.94,614.43 1089.72,631.94 1091.80,633.76 C1093.89,635.59 1096.66,628.25 1098.75,627.07 C1100.83,625.88 1103.61,625.30 1105.69,625.85 C1107.78,626.40 1110.56,629.44 1112.64,630.72 C1114.73,632.00 1117.50,633.28 1119.59,634.37 C1121.67,635.47 1124.45,637.66 1126.54,638.03 C1128.62,638.39 1131.40,637.36 1133.48,636.81 C1135.57,636.26 1138.35,634.74 1140.43,634.37 C1142.51,634.01 1145.29,636.02 1147.38,634.37 C1149.46,632.73 1152.24,623.05 1154.32,623.41 C1156.41,623.78 1159.19,638.27 1161.27,636.81 C1163.36,635.35 1166.13,613.49 1168.22,613.67 C1170.30,613.85 1173.08,634.19 1175.16,638.03 C1177.25,641.86 1180.03,640.16 1182.11,639.25 C1184.20,638.33 1186.97,631.94 1189.06,631.94 C1191.14,631.94 1193.92,639.79 1196.01,639.25 C1198.09,638.70 1200.87,630.84 1202.95,628.28 C1205.04,625.73 1207.82,621.10 1209.90,622.19 C1211.98,623.29 1214.76,635.41 1216.85,635.59 C1218.93,635.77 1221.71,623.23 1223.79,623.41 C1225.88,623.59 1228.66,637.91 1230.74,636.81 C1232.83,635.71 1235.60,615.92 1237.69,616.10 C1239.77,616.29 1242.55,635.65 1244.63,638.03 C1246.72,640.40 1249.50,634.50 1251.58,631.94 C1253.67,629.38 1256.44,620.79 1258.53,620.98 C1260.61,621.16 1263.39,632.24 1265.48,633.16 C1267.56,634.07 1270.34,626.97 1272.42,627.07 C1274.51,627.16 1277.29,631.76 1279.37,633.76 C1281.45,635.77 1284.23,640.19 1286.32,640.46 C1288.40,640.74 1291.18,636.32 1293.26,635.59 C1295.35,634.86 1298.13,636.14 1300.21,635.59 C1302.30,635.04 1305.07,635.23 1307.16,631.94 C1309.24,628.65 1312.02,615.50 1314.11,613.67 C1316.19,611.84 1318.97,617.20 1321.05,619.76 C1323.14,622.32 1325.91,628.53 1328.00,630.72 C1330.08,632.91 1333.90,633.83 1334.95,634.37 L1334.95,634.37 C1333.90,633.83 1330.08,632.91 1328.00,630.72 C1325.91,628.53 1323.14,622.32 1321.05,619.76 C1318.97,617.20 1316.19,611.84 1314.11,613.67 C1312.02,615.50 1309.24,628.65 1307.16,631.94 C1305.07,635.23 1302.30,635.04 1300.21,635.59 C1298.13,636.14 1295.35,634.86 1293.26,635.59 C1291.18,636.32 1288.40,640.74 1286.32,640.46 C1284.23,640.19 1281.45,635.77 1279.37,633.76 C1277.29,631.76 1274.51,627.16 1272.42,627.07 C1270.34,626.97 1267.56,634.07 1265.48,633.16 C1263.39,632.24 1260.61,621.16 1258.53,620.98 C1256.44,620.79 1253.67,629.38 1251.58,631.94 C1249.50,634.50 1246.72,640.40 1244.63,638.03 C1242.55,635.65 1239.77,616.29 1237.69,616.10 C1235.60,615.92 1232.83,635.71 1230.74,636.81 C1228.66,637.91 1225.88,623.59 1223.79,623.41 C1221.71,623.23 1218.93,635.77 1216.85,635.59 C1214.76,635.41 1211.98,623.29 1209.90,622.19 C1207.82,621.10 1205.04,625.73 1202.95,628.28 C1200.87,630.84 1198.09,638.70 1196.01,639.25 C1193.92,639.79 1191.14,631.94 1189.06,631.94 C1186.97,631.94 1184.20,638.33 1182.11,639.25 C1180.03,640.16 1177.25,641.86 1175.16,638.03 C1173.08,634.19 1170.30,613.85 1168.22,613.67 C1166.13,613.49 1163.36,635.35 1161.27,636.81 C1159.19,638.27 1156.41,623.78 1154.32,623.41 C1152.24,623.05 1149.46,632.73 1147.38,634.37 C1145.29,636.02 1142.51,634.01 1140.43,634.37 C1138.35,634.74 1135.57,636.26 1133.48,636.81 C1131.40,637.36 1128.62,638.39 1126.54,638.03 C1124.45,637.66 1121.67,635.47 1119.59,634.37 C1117.50,633.28 1114.73,632.00 1112.64,630.72 C1110.56,629.44 1107.78,626.40 1105.69,625.85 C1103.61,625.30 1100.83,625.88 1098.75,627.07 C1096.66,628.25 1093.89,635.59 1091.80,633.76 C1089.72,631.94 1086.94,614.43 1084.85,614.89 C1082.77,615.34 1079.99,634.80 1077.91,636.81 C1075.82,638.82 1073.04,631.39 1070.96,628.28 C1068.88,625.18 1066.10,614.83 1064.01,616.10 C1061.93,617.38 1059.15,635.17 1057.07,636.81 C1054.98,638.45 1052.20,627.25 1050.12,627.07 C1048.03,626.88 1045.26,635.23 1043.17,635.59 C1041.09,635.96 1038.31,628.59 1036.22,629.50 C1034.14,630.42 1031.36,639.86 1029.28,641.68 C1027.19,643.51 1024.42,643.33 1022.33,641.68 C1020.25,640.04 1017.47,631.45 1015.38,630.72 C1013.30,629.99 1010.52,636.44 1008.44,636.81 C1006.35,637.18 1003.57,634.98 1001.49,633.16 C999.41,631.33 996.63,625.91 994.54,624.63 C992.46,623.35 989.68,622.99 987.60,624.63 C985.51,626.27 982.73,633.58 980.65,635.59 C978.56,637.60 975.79,654.11 973.70,638.03 C971.62,621.95 968.84,532.61 966.75,528.41 C964.67,524.21 961.89,593.21 959.81,610.01 C957.72,626.82 954.95,636.63 952.86,640.46 C950.78,644.30 948.00,637.97 945.91,635.59 C943.83,633.22 941.05,625.00 938.97,624.63 C936.88,624.26 934.10,632.06 932.02,633.16 C929.94,634.25 927.16,632.12 925.07,631.94 C922.99,631.76 920.21,632.12 918.13,631.94 C916.04,631.76 913.26,631.63 911.18,630.72 C909.09,629.81 906.32,624.75 904.23,625.85 C902.15,626.94 899.37,638.03 897.28,638.03 C895.20,638.03 892.42,626.40 890.34,625.85 C888.25,625.30 885.48,633.46 883.39,634.37 C881.31,635.29 878.53,631.57 876.44,631.94 C874.36,632.30 871.58,636.08 869.50,636.81 C867.41,637.54 863.59,636.81 862.55,636.81Z" fill="#3cb0c0" fill-opacity="0.6" stroke="none" clip-path="url(#clip4)"/><path d="M862.55,635.59 C863.59,635.77 867.41,638.45 869.50,636.81 C871.58,635.17 874.36,625.00 876.44,624.63 C878.53,624.26 881.31,634.19 883.39,634.37 C885.48,634.56 888.25,625.30 890.34,625.85 C892.42,626.40 895.20,638.03 897.28,638.03 C899.37,638.03 902.15,626.94 904.23,625.85 C906.32,624.75 909.09,629.81 911.18,630.72 C913.26,631.63 916.04,631.76 918.13,631.94 C920.21,632.12 922.99,631.76 925.07,631.94 C927.16,632.12 929.94,634.25 932.02,633.16 C934.10,632.06 936.88,624.26 938.97,624.63 C941.05,625.00 943.83,633.22 945.91,635.59 C948.00,637.97 950.78,644.30 952.86,640.46 C954.95,636.63 957.72,626.82 959.81,610.01 C961.89,593.21 964.67,524.21 966.75,528.41 C968.84,532.61 971.62,621.95 973.70,638.03 C975.79,654.11 978.56,637.60 980.65,635.59 C982.73,633.58 985.51,626.27 987.60,624.63 C989.68,622.99 992.46,623.35 994.54,624.63 C996.63,625.91 999.41,631.33 1001.49,633.16 C1003.57,634.98 1006.35,637.18 1008.44,636.81 C1010.52,636.44 1013.30,629.99 1015.38,630.72 C1017.47,631.45 1020.25,640.04 1022.33,641.68 C1024.42,643.33 1027.19,643.51 1029.28,641.68 C1031.36,639.86 1034.14,630.42 1036.22,629.50 C1038.31,628.59 1041.09,635.96 1043.17,635.59 C1045.26,635.23 1048.03,626.88 1050.12,627.07 C1052.20,627.25 1054.98,638.45 1057.07,636.81 C1059.15,635.17 1061.93,617.38 1064.01,616.10 C1066.10,614.83 1068.88,625.18 1070.96,628.28 C1073.04,631.39 1075.82,638.82 1077.91,636.81 C1079.99,634.80 1082.77,615.34 1084.85,614.89 C1086.94,614.43 1089.72,631.94 1091.80,633.76 C1093.89,635.59 1096.66,628.25 1098.75,627.07 C1100.83,625.88 1103.61,625.30 1105.69,625.85 C1107.78,626.40 1110.56,629.44 1112.64,630.72 C1114.73,632.00 1117.50,633.28 1119.59,634.37 C1121.67,635.47 1124.45,637.66 1126.54,638.03 C1128.62,638.39 1131.40,637.36 1133.48,636.81 C1135.57,636.26 1138.35,634.74 1140.43,634.37 C1142.51,634.01 1145.29,636.02 1147.38,634.37 C1149.46,632.73 1152.24,623.05 1154.32,623.41 C1156.41,623.78 1159.19,638.27 1161.27,636.81 C1163.36,635.35 1166.13,613.49 1168.22,613.67 C1170.30,613.85 1173.08,634.19 1175.16,638.03 C1177.25,641.86 1180.03,640.16 1182.11,639.25 C1184.20,638.33 1186.97,631.94 1189.06,631.94 C1191.14,631.94 1193.92,639.79 1196.01,639.25 C1198.09,638.70 1200.87,630.84 1202.95,628.28 C1205.04,625.73 1207.82,621.10 1209.90,622.19 C1211.98,623.29 1214.76,635.41 1216.85,635.59 C1218.93,635.77 1221.71,623.23 1223.79,623.41 C1225.88,623.59 1228.66,637.91 1230.74,636.81 C1232.83,635.71 1235.60,615.92 1237.69,616.10 C1239.77,616.29 1242.55,635.65 1244.63,638.03 C1246.72,640.40 1249.50,634.50 1251.58,631.94 C1253.67,629.38 1256.44,620.79 1258.53,620.98 C1260.61,621.16 1263.39,632.24 1265.48,633.16 C1267.56,634.07 1270.34,626.97 1272.42,627.07 C1274.51,627.16 1277.29,631.76 1279.37,633.76 C1281.45,635.77 1284.23,640.19 1286.32,640.46 C1288.40,640.74 1291.18,636.32 1293.26,635.59 C1295.35,634.86 1298.13,636.14 1300.21,635.59 C1302.30,635.04 1305.07,635.23 1307.16,631.94 C1309.24,628.65 1312.02,615.50 1314.11,613.67 C1316.19,611.84 1318.97,617.20 1321.05,619.76 C1323.14,622.32 1325.91,628.53 1328.00,630.72 C1330.08,632.91 1333.90,633.83 1334.95,634.37" fill="none" stroke="#3cb0c0" stroke-width="1.4" clip-path="url(#clip4)"/><line x1="862.55" y1="642.4" x2="1334.95" y2="642.4" stroke="#daa05d" stroke-width="1.2"/><line x1="1341.4" y1="521" x2="1341.4" y2="642.5" stroke="#eee" stroke-width="1"/><circle cx="1352.5" cy="527" r="6.1" fill="#b0b0b0"/><path d="M1351.3,523.7 L1354.4,527 L1351.3,530.3" fill="none" stroke="#fff" stroke-width="2.3"/><circle cx="1369.9" cy="524.10" r="4.6" fill="#daa05d"/><circle cx="1369.9" cy="541.00" r="4.6" fill="#bfae40"/><circle cx="1369.9" cy="557.20" r="4.6" fill="#444ec6"/><circle cx="1369.9" cy="573.30" r="4.6" fill="#c4503f"/><circle cx="1369.9" cy="590.10" r="4.6" fill="#3cb0c0"/><line x1="1585" y1="618.52" x2="1589.8" y2="618.52" stroke="#d4d4d4" stroke-width="1"/><line x1="1585" y1="594.14" x2="1589.8" y2="594.14" stroke="#d4d4d4" stroke-width="1"/><line x1="1585" y1="569.76" x2="1589.8" y2="569.76" stroke="#d4d4d4" stroke-width="1"/><line x1="1585" y1="545.38" x2="1589.8" y2="545.38" stroke="#d4d4d4" stroke-width="1"/><line x1="1624.40" y1="642" x2="1624.40" y2="647.7" stroke="#d4d4d4" stroke-width="1"/><line x1="1673.67" y1="642" x2="1673.67" y2="647.7" stroke="#d4d4d4" stroke-width="1"/><line x1="1722.94" y1="642" x2="1722.94" y2="647.7" stroke="#d4d4d4" stroke-width="1"/><line x1="1772.21" y1="642" x2="1772.21" y2="647.7" stroke="#d4d4d4" stroke-width="1"/><line x1="1821.48" y1="642" x2="1821.48" y2="647.7" stroke="#d4d4d4" stroke-width="1"/><line x1="1870.75" y1="642" x2="1870.75" y2="647.7" stroke="#d4d4d4" stroke-width="1"/><line x1="1920.02" y1="642" x2="1920.02" y2="647.7" stroke="#d4d4d4" stroke-width="1"/><line x1="1969.29" y1="642" x2="1969.29" y2="647.7" stroke="#d4d4d4" stroke-width="1"/><line x1="2018.56" y1="642" x2="2018.56" y2="647.7" stroke="#d4d4d4" stroke-width="1"/><line x1="2067.83" y1="642" x2="2067.83" y2="647.7" stroke="#d4d4d4" stroke-width="1"/><line x1="2117.10" y1="642" x2="2117.10" y2="647.7" stroke="#d4d4d4" stroke-width="1"/><line x1="2166.37" y1="642" x2="2166.37" y2="647.7" stroke="#d4d4d4" stroke-width="1"/><line x1="1590" y1="521.5" x2="2176.3" y2="521.5" stroke="#6cc04a" stroke-width="1.6"/><circle cx="1590.50" cy="522.2" r="1.3" fill="#6cc04a"/><circle cx="1598.71" cy="522.2" r="1.3" fill="#6cc04a"/><circle cx="1606.92" cy="522.2" r="1.3" fill="#6cc04a"/><circle cx="1615.14" cy="522.2" r="1.3" fill="#6cc04a"/><circle cx="1623.35" cy="522.2" r="1.3" fill="#6cc04a"/><circle cx="1631.56" cy="522.2" r="1.3" fill="#6cc04a"/><circle cx="1639.77" cy="522.2" r="1.3" fill="#6cc04a"/><circle cx="1647.98" cy="522.2" r="1.3" fill="#6cc04a"/><circle cx="1656.20" cy="522.2" r="1.3" fill="#6cc04a"/><circle cx="1664.41" cy="522.2" r="1.3" fill="#6cc04a"/><circle cx="1672.62" cy="522.2" r="1.3" fill="#6cc04a"/><circle cx="1680.83" cy="522.2" r="1.3" fill="#6cc04a"/><circle cx="1689.04" cy="522.2" r="1.3" fill="#6cc04a"/><circle cx="1697.26" cy="522.2" r="1.3" fill="#6cc04a"/><circle cx="1705.47" cy="522.2" r="1.3" fill="#6cc04a"/><circle cx="1713.68" cy="522.2" r="1.3" fill="#6cc04a"/><circle cx="1721.89" cy="522.2" r="1.3" fill="#6cc04a"/><circle cx="1730.10" cy="522.2" r="1.3" fill="#6cc04a"/><circle cx="1738.32" cy="522.2" r="1.3" fill="#6cc04a"/><circle cx="1746.53" cy="522.2" r="1.3" fill="#6cc04a"/><circle cx="1754.74" cy="522.2" r="1.3" fill="#6cc04a"/><circle cx="1762.95" cy="522.2" r="1.3" fill="#6cc04a"/><circle cx="1771.16" cy="522.2" r="1.3" fill="#6cc04a"/><circle cx="1779.38" cy="522.2" r="1.3" fill="#6cc04a"/><circle cx="1787.59" cy="522.2" r="1.3" fill="#6cc04a"/><circle cx="1795.80" cy="522.2" r="1.3" fill="#6cc04a"/><circle cx="1804.01" cy="522.2" r="1.3" fill="#6cc04a"/><circle cx="1812.22" cy="522.2" r="1.3" fill="#6cc04a"/><circle cx="1820.44" cy="522.2" r="1.3" fill="#6cc04a"/><circle cx="1828.65" cy="522.2" r="1.3" fill="#6cc04a"/><circle cx="1836.86" cy="522.2" r="1.3" fill="#6cc04a"/><circle cx="1845.07" cy="522.2" r="1.3" fill="#6cc04a"/><circle cx="1853.28" cy="522.2" r="1.3" fill="#6cc04a"/><circle cx="1861.50" cy="522.2" r="1.3" fill="#6cc04a"/><circle cx="1869.71" cy="522.2" r="1.3" fill="#6cc04a"/><circle cx="1877.92" cy="522.2" r="1.3" fill="#6cc04a"/><circle cx="1886.13" cy="522.2" r="1.3" fill="#6cc04a"/><circle cx="1894.34" cy="522.2" r="1.3" fill="#6cc04a"/><circle cx="1902.56" cy="522.2" r="1.3" fill="#6cc04a"/><circle cx="1910.77" cy="522.2" r="1.3" fill="#6cc04a"/><circle cx="1918.98" cy="522.2" r="1.3" fill="#6cc04a"/><circle cx="1927.19" cy="522.2" r="1.3" fill="#6cc04a"/><circle cx="1935.40" cy="522.2" r="1.3" fill="#6cc04a"/><circle cx="1943.62" cy="522.2" r="1.3" fill="#6cc04a"/><circle cx="1951.83" cy="522.2" r="1.3" fill="#6cc04a"/><circle cx="1960.04" cy="522.2" r="1.3" fill="#6cc04a"/><circle cx="1968.25" cy="522.2" r="1.3" fill="#6cc04a"/><circle cx="1976.46" cy="522.2" r="1.3" fill="#6cc04a"/><circle cx="1984.68" cy="522.2" r="1.3" fill="#6cc04a"/><circle cx="1992.89" cy="522.2" r="1.3" fill="#6cc04a"/><circle cx="2001.10" cy="522.2" r="1.3" fill="#6cc04a"/><circle cx="2009.31" cy="522.2" r="1.3" fill="#6cc04a"/><circle cx="2017.52" cy="522.2" r="1.3" fill="#6cc04a"/><circle cx="2025.74" cy="522.2" r="1.3" fill="#6cc04a"/><circle cx="2033.95" cy="522.2" r="1.3" fill="#6cc04a"/><circle cx="2042.16" cy="522.2" r="1.3" fill="#6cc04a"/><circle cx="2050.37" cy="522.2" r="1.3" fill="#6cc04a"/><circle cx="2058.58" cy="522.2" r="1.3" fill="#6cc04a"/><circle cx="2066.80" cy="522.2" r="1.3" fill="#6cc04a"/><circle cx="2075.01" cy="522.2" r="1.3" fill="#6cc04a"/><circle cx="2083.22" cy="522.2" r="1.3" fill="#6cc04a"/><circle cx="2091.43" cy="522.2" r="1.3" fill="#6cc04a"/><circle cx="2099.64" cy="522.2" r="1.3" fill="#6cc04a"/><circle cx="2107.86" cy="522.2" r="1.3" fill="#6cc04a"/><circle cx="2116.07" cy="522.2" r="1.3" fill="#6cc04a"/><circle cx="2124.28" cy="522.2" r="1.3" fill="#6cc04a"/><circle cx="2132.49" cy="522.2" r="1.3" fill="#6cc04a"/><circle cx="2140.70" cy="522.2" r="1.3" fill="#6cc04a"/><circle cx="2148.92" cy="522.2" r="1.3" fill="#6cc04a"/><circle cx="2157.13" cy="522.2" r="1.3" fill="#6cc04a"/><circle cx="2165.34" cy="522.2" r="1.3" fill="#6cc04a"/><circle cx="2173.55" cy="522.2" r="1.3" fill="#6cc04a"/><line x1="2182.5" y1="520.5" x2="2182.5" y2="642.7" stroke="#eee" stroke-width="1"/><circle cx="2193.6" cy="526.6" r="6.1" fill="#b0b0b0"/><path d="M2192.4,523.3000000000001 L2195.5,526.6 L2192.4,529.9" fill="none" stroke="#fff" stroke-width="2.3"/><circle cx="2210.4" cy="524.2" r="4.6" fill="#6cc04a"/></svg>
<div class="t" style="left:20.60px;top:285.10px;font-size:15.3px;color:#555;-webkit-text-stroke:0.1px currentColor">Alert level evolution</div>
<div class="t" style="right:2282.10px;top:393.10px;font-size:10px;color:#98a1ab;-webkit-text-stroke:0;">0</div>
<div class="t" style="right:2282.10px;top:376.52px;font-size:10px;color:#98a1ab;-webkit-text-stroke:0;">20</div>
<div class="t" style="right:2282.10px;top:359.94px;font-size:10px;color:#98a1ab;-webkit-text-stroke:0;">40</div>
<div class="t" style="right:2282.10px;top:343.36px;font-size:10px;color:#98a1ab;-webkit-text-stroke:0;">60</div>
<div class="t" style="right:2282.10px;top:326.78px;font-size:10px;color:#98a1ab;-webkit-text-stroke:0;">80</div>
<div class="t" style="right:2282.10px;top:310.20px;font-size:10px;color:#98a1ab;-webkit-text-stroke:0;">100</div>
<div class="t" style="left:49.00px;top:356.40px;font-size:11px;color:#98a1ab;transform:translate(-50%,-50%) rotate(-90deg);line-height:1;-webkit-text-stroke:0">Count</div>
<div class="t" style="left:123.40px;transform:translateX(-50%);top:404.70px;font-size:10px;color:#98a1ab;-webkit-text-stroke:0;">20:00</div>
<div class="t" style="left:185.22px;transform:translateX(-50%);top:404.70px;font-size:10px;color:#98a1ab;-webkit-text-stroke:0;">21:00</div>
<div class="t" style="left:247.04px;transform:translateX(-50%);top:404.70px;font-size:10px;color:#98a1ab;-webkit-text-stroke:0;">22:00</div>
<div class="t" style="left:308.86px;transform:translateX(-50%);top:404.70px;font-size:10px;color:#98a1ab;-webkit-text-stroke:0;">23:00</div>
<div class="t" style="left:370.68px;transform:translateX(-50%);top:404.70px;font-size:10px;color:#98a1ab;-webkit-text-stroke:0;">00:00</div>
<div class="t" style="left:432.50px;transform:translateX(-50%);top:404.70px;font-size:10px;color:#98a1ab;-webkit-text-stroke:0;">01:00</div>
<div class="t" style="left:494.32px;transform:translateX(-50%);top:404.70px;font-size:10px;color:#98a1ab;-webkit-text-stroke:0;">02:00</div>
<div class="t" style="left:556.14px;transform:translateX(-50%);top:404.70px;font-size:10px;color:#98a1ab;-webkit-text-stroke:0;">03:00</div>
<div class="t" style="left:617.96px;transform:translateX(-50%);top:404.70px;font-size:10px;color:#98a1ab;-webkit-text-stroke:0;">04:00</div>
<div class="t" style="left:679.78px;transform:translateX(-50%);top:404.70px;font-size:10px;color:#98a1ab;-webkit-text-stroke:0;">05:00</div>
<div class="t" style="left:741.60px;transform:translateX(-50%);top:404.70px;font-size:10px;color:#98a1ab;-webkit-text-stroke:0;">06:00</div>
<div class="t" style="left:803.42px;transform:translateX(-50%);top:404.70px;font-size:10px;color:#98a1ab;-webkit-text-stroke:0;">07:00</div>
<div class="t" style="left:452.20px;transform:translateX(-50%);top:423.11px;font-size:10.7px;color:#98a1ab;-webkit-text-stroke:0;">@timestamp per 10 minutes</div>
<div class="t" style="left:859.40px;top:313.15px;font-size:11px;color:#666;-webkit-text-stroke:0;">5</div>
<div class="t" style="left:859.40px;top:329.45px;font-size:11px;color:#666;-webkit-text-stroke:0;">6</div>
<div class="t" style="left:859.40px;top:345.85px;font-size:11px;color:#666;-webkit-text-stroke:0;">8</div>
<div class="t" style="left:859.40px;top:362.25px;font-size:11px;color:#666;-webkit-text-stroke:0;">3</div>
<div class="t" style="left:859.40px;top:379.05px;font-size:11px;color:#666;-webkit-text-stroke:0;">7</div>
<div class="t" style="left:950.20px;top:285.10px;font-size:15.3px;color:#555;-webkit-text-stroke:0.1px currentColor">Alerts</div>
<div class="t" style="right:1352.60px;top:393.00px;font-size:10px;color:#98a1ab;-webkit-text-stroke:0;">0</div>
<div class="t" style="right:1352.60px;top:376.44px;font-size:10px;color:#98a1ab;-webkit-text-stroke:0;">20</div>
<div class="t" style="right:1352.60px;top:359.88px;font-size:10px;color:#98a1ab;-webkit-text-stroke:0;">40</div>
<div class="t" style="right:1352.60px;top:343.32px;font-size:10px;color:#98a1ab;-webkit-text-stroke:0;">60</div>
<div class="t" style="right:1352.60px;top:326.76px;font-size:10px;color:#98a1ab;-webkit-text-stroke:0;">80</div>
<div class="t" style="right:1352.60px;top:310.20px;font-size:10px;color:#98a1ab;-webkit-text-stroke:0;">100</div>
<div class="t" style="left:979.30px;top:356.30px;font-size:11px;color:#98a1ab;transform:translate(-50%,-50%) rotate(-90deg);line-height:1;-webkit-text-stroke:0">Count</div>
<div class="t" style="left:1086.30px;transform:translateX(-50%);top:404.70px;font-size:10px;color:#98a1ab;-webkit-text-stroke:0;">20:00</div>
<div class="t" style="left:1194.93px;transform:translateX(-50%);top:404.70px;font-size:10px;color:#98a1ab;-webkit-text-stroke:0;">21:00</div>
<div class="t" style="left:1303.56px;transform:translateX(-50%);top:404.70px;font-size:10px;color:#98a1ab;-webkit-text-stroke:0;">22:00</div>
<div class="t" style="left:1412.19px;transform:translateX(-50%);top:404.70px;font-size:10px;color:#98a1ab;-webkit-text-stroke:0;">23:00</div>
<div class="t" style="left:1520.82px;transform:translateX(-50%);top:404.70px;font-size:10px;color:#98a1ab;-webkit-text-stroke:0;">00:00</div>
<div class="t" style="left:1629.45px;transform:translateX(-50%);top:404.70px;font-size:10px;color:#98a1ab;-webkit-text-stroke:0;">01:00</div>
<div class="t" style="left:1738.08px;transform:translateX(-50%);top:404.70px;font-size:10px;color:#98a1ab;-webkit-text-stroke:0;">02:00</div>
<div class="t" style="left:1846.71px;transform:translateX(-50%);top:404.70px;font-size:10px;color:#98a1ab;-webkit-text-stroke:0;">03:00</div>
<div class="t" style="left:1955.34px;transform:translateX(-50%);top:404.70px;font-size:10px;color:#98a1ab;-webkit-text-stroke:0;">04:00</div>
<div class="t" style="left:2063.97px;transform:translateX(-50%);top:404.70px;font-size:10px;color:#98a1ab;-webkit-text-stroke:0;">05:00</div>
<div class="t" style="left:2172.60px;transform:translateX(-50%);top:404.70px;font-size:10px;color:#98a1ab;-webkit-text-stroke:0;">06:00</div>
<div class="t" style="left:2281.23px;transform:translateX(-50%);top:404.70px;font-size:10px;color:#98a1ab;-webkit-text-stroke:0;">07:00</div>
<div class="t" style="left:1664.50px;transform:translateX(-50%);top:423.11px;font-size:10.7px;color:#98a1ab;-webkit-text-stroke:0;">@timestamp per 10 minutes</div>
<div class="t" style="left:20.60px;top:490.89px;font-size:15.3px;color:#555;-webkit-text-stroke:0.1px currentColor">Top 5 agents</div>
<div class="t" style="left:617.90px;top:518.65px;font-size:11px;color:#666;-webkit-text-stroke:0;">amzn-suricata-test01</div>
<div class="t" style="left:617.90px;top:535.55px;font-size:11px;color:#666;-webkit-text-stroke:0;">test-server-new-osse…</div>
<div class="t" style="left:617.90px;top:551.75px;font-size:11px;color:#666;-webkit-text-stroke:0;">NAS</div>
<div class="t" style="left:617.90px;top:567.85px;font-size:11px;color:#666;-webkit-text-stroke:0;">amzn-securestack-pr…</div>
<div class="t" style="left:617.90px;top:584.65px;font-size:11px;color:#666;-webkit-text-stroke:0;">ecs-prod01</div>
<div class="t" style="left:780.70px;top:490.89px;font-size:15.3px;color:#555;-webkit-text-stroke:0.1px currentColor">Alerts evolution - Top 5 agents</div>
<div class="t" style="right:1522.30px;top:638.20px;font-size:10px;color:#98a1ab;-webkit-text-stroke:0;">0</div>
<div class="t" style="right:1522.30px;top:613.84px;font-size:10px;color:#98a1ab;-webkit-text-stroke:0;">20</div>
<div class="t" style="right:1522.30px;top:589.48px;font-size:10px;color:#98a1ab;-webkit-text-stroke:0;">40</div>
<div class="t" style="right:1522.30px;top:565.12px;font-size:10px;color:#98a1ab;-webkit-text-stroke:0;">60</div>
<div class="t" style="right:1522.30px;top:540.76px;font-size:10px;color:#98a1ab;-webkit-text-stroke:0;">80</div>
<div class="t" style="right:1522.30px;top:516.40px;font-size:10px;color:#98a1ab;-webkit-text-stroke:0;">100</div>
<div class="t" style="left:809.50px;top:582.00px;font-size:11px;color:#98a1ab;transform:translate(-50%,-50%) rotate(-90deg);line-height:1;-webkit-text-stroke:0">Count</div>
<div class="t" style="left:869.50px;transform:translateX(-50%);top:648.20px;font-size:10px;color:#98a1ab;-webkit-text-stroke:0;">20:00</div>
<div class="t" style="left:911.18px;transform:translateX(-50%);top:648.20px;font-size:10px;color:#98a1ab;-webkit-text-stroke:0;">21:00</div>
<div class="t" style="left:952.86px;transform:translateX(-50%);top:648.20px;font-size:10px;color:#98a1ab;-webkit-text-stroke:0;">22:00</div>
<div class="t" style="left:994.54px;transform:translateX(-50%);top:648.20px;font-size:10px;color:#98a1ab;-webkit-text-stroke:0;">23:00</div>
<div class="t" style="left:1036.22px;transform:translateX(-50%);top:648.20px;font-size:10px;color:#98a1ab;-webkit-text-stroke:0;">00:00</div>
<div class="t" style="left:1077.90px;transform:translateX(-50%);top:648.20px;font-size:10px;color:#98a1ab;-webkit-text-stroke:0;">01:00</div>
<div class="t" style="left:1119.58px;transform:translateX(-50%);top:648.20px;font-size:10px;color:#98a1ab;-webkit-text-stroke:0;">02:00</div>
<div class="t" style="left:1161.26px;transform:translateX(-50%);top:648.20px;font-size:10px;color:#98a1ab;-webkit-text-stroke:0;">03:00</div>
<div class="t" style="left:1202.94px;transform:translateX(-50%);top:648.20px;font-size:10px;color:#98a1ab;-webkit-text-stroke:0;">04:00</div>
<div class="t" style="left:1244.62px;transform:translateX(-50%);top:648.20px;font-size:10px;color:#98a1ab;-webkit-text-stroke:0;">05:00</div>
<div class="t" style="left:1286.30px;transform:translateX(-50%);top:648.20px;font-size:10px;color:#98a1ab;-webkit-text-stroke:0;">06:00</div>
<div class="t" style="left:1327.98px;transform:translateX(-50%);top:648.20px;font-size:10px;color:#98a1ab;-webkit-text-stroke:0;">07:00</div>
<div class="t" style="left:1091.00px;transform:translateX(-50%);top:667.50px;font-size:10.7px;color:#98a1ab;-webkit-text-stroke:0;">@timestamp per 10 minutes</div>
<div class="t" style="left:1377.40px;top:518.65px;font-size:11px;color:#666;-webkit-text-stroke:0;">amzn-suricata-test01</div>
<div class="t" style="left:1377.40px;top:535.55px;font-size:11px;color:#666;-webkit-text-stroke:0;">test-server-new-osse…</div>
<div class="t" style="left:1377.40px;top:551.75px;font-size:11px;color:#666;-webkit-text-stroke:0;">NAS</div>
<div class="t" style="left:1377.40px;top:567.85px;font-size:11px;color:#666;-webkit-text-stroke:0;">amzn-securestack-pr…</div>
<div class="t" style="left:1377.40px;top:584.65px;font-size:11px;color:#666;-webkit-text-stroke:0;">ecs-prod01</div>
<div class="t" style="left:1540.70px;top:490.89px;font-size:15.3px;color:#555;-webkit-text-stroke:0.1px currentColor">Agents status</div>
<div class="t" style="right:773.40px;top:638.20px;font-size:10px;color:#98a1ab;-webkit-text-stroke:0;">0</div>
<div class="t" style="right:773.40px;top:613.82px;font-size:10px;color:#98a1ab;-webkit-text-stroke:0;">1</div>
<div class="t" style="right:773.40px;top:589.44px;font-size:10px;color:#98a1ab;-webkit-text-stroke:0;">2</div>
<div class="t" style="right:773.40px;top:565.06px;font-size:10px;color:#98a1ab;-webkit-text-stroke:0;">3</div>
<div class="t" style="right:773.40px;top:540.68px;font-size:10px;color:#98a1ab;-webkit-text-stroke:0;">4</div>
<div class="t" style="right:773.40px;top:516.30px;font-size:10px;color:#98a1ab;-webkit-text-stroke:0;">5</div>
<div class="t" style="left:1569.50px;top:582.00px;font-size:11px;color:#98a1ab;transform:translate(-50%,-50%) rotate(-90deg);line-height:1;-webkit-text-stroke:0">Count</div>
<div class="t" style="left:1624.40px;transform:translateX(-50%);top:648.70px;font-size:10px;color:#98a1ab;-webkit-text-stroke:0;">20:00</div>
<div class="t" style="left:1673.67px;transform:translateX(-50%);top:648.70px;font-size:10px;color:#98a1ab;-webkit-text-stroke:0;">21:00</div>
<div class="t" style="left:1722.94px;transform:translateX(-50%);top:648.70px;font-size:10px;color:#98a1ab;-webkit-text-stroke:0;">22:00</div>
<div class="t" style="left:1772.21px;transform:translateX(-50%);top:648.70px;font-size:10px;color:#98a1ab;-webkit-text-stroke:0;">23:00</div>
<div class="t" style="left:1821.48px;transform:translateX(-50%);top:648.70px;font-size:10px;color:#98a1ab;-webkit-text-stroke:0;">00:00</div>
<div class="t" style="left:1870.75px;transform:translateX(-50%);top:648.70px;font-size:10px;color:#98a1ab;-webkit-text-stroke:0;">01:00</div>
<div class="t" style="left:1920.02px;transform:translateX(-50%);top:648.70px;font-size:10px;color:#98a1ab;-webkit-text-stroke:0;">02:00</div>
<div class="t" style="left:1969.29px;transform:translateX(-50%);top:648.70px;font-size:10px;color:#98a1ab;-webkit-text-stroke:0;">03:00</div>
<div class="t" style="left:2018.56px;transform:translateX(-50%);top:648.70px;font-size:10px;color:#98a1ab;-webkit-text-stroke:0;">04:00</div>
<div class="t" style="left:2067.83px;transform:translateX(-50%);top:648.70px;font-size:10px;color:#98a1ab;-webkit-text-stroke:0;">05:00</div>
<div class="t" style="left:2117.10px;transform:translateX(-50%);top:648.70px;font-size:10px;color:#98a1ab;-webkit-text-stroke:0;">06:00</div>
<div class="t" style="left:2166.37px;transform:translateX(-50%);top:648.70px;font-size:10px;color:#98a1ab;-webkit-text-stroke:0;">07:00</div>
<div class="t" style="left:1886.50px;transform:translateX(-50%);top:667.50px;font-size:10.7px;color:#98a1ab;-webkit-text-stroke:0;">@timestamp per 10 minutes</div>
<div class="t" style="left:2218.30px;top:518.65px;font-size:11px;color:#666;-webkit-text-stroke:0;">Active</div>
<div class="t" style="left:20.90px;top:828.78px;font-size:15.2px;color:#555;-webkit-text-stroke:0.1px currentColor">Alerts summary</div>
<div class="t" style="left:1434.90px;top:828.78px;font-size:15.2px;color:#555;-webkit-text-stroke:0.1px currentColor">Groups summary</div>
<div class="t" style="left:50.70px;top:879.16px;font-size:12.4px;color:#1a1a1a;font-weight:700;-webkit-text-stroke:0;">Rule ID</div>
<svg class="r" style="left:97.60px;top:879.80px" width="8" height="10"><path d="M-0.2,4.4 L3.75,-0.1 L7.7,4.4Z M-0.2,5.1 L3.75,9.6 L7.7,5.1Z" fill="#b0b9c3"/></svg>
<div class="t" style="left:238.90px;top:879.16px;font-size:12.4px;color:#1a1a1a;font-weight:700;-webkit-text-stroke:0;">Description</div>
<svg class="r" style="left:311.50px;top:879.80px" width="8" height="10"><path d="M-0.2,4.4 L3.75,-0.1 L7.7,4.4Z M-0.2,5.1 L3.75,9.6 L7.7,5.1Z" fill="#b0b9c3"/></svg>
<div class="t" style="left:1065.60px;top:879.16px;font-size:12.4px;color:#1a1a1a;font-weight:700;-webkit-text-stroke:0;">Level</div>
<svg class="r" style="left:1101.00px;top:879.80px" width="8" height="10"><path d="M-0.2,4.4 L3.75,-0.1 L7.7,4.4Z M-0.2,5.1 L3.75,9.6 L7.7,5.1Z" fill="#b0b9c3"/></svg>
<div class="t" style="left:1218.70px;top:879.16px;font-size:12.4px;color:#1a1a1a;font-weight:700;-webkit-text-stroke:0;">Count</div>
<svg class="r" style="left:1258.40px;top:879.80px" width="8" height="10"><path d="M-0.2,4.4 L3.75,-0.1 L7.7,4.4Z M-0.2,5.1 L3.75,9.6 L7.7,5.1Z" fill="#b0b9c3"/></svg>
<div class="t" style="left:1464.50px;top:879.16px;font-size:12.4px;color:#1a1a1a;font-weight:700;-webkit-text-stroke:0;">Group</div>
<svg class="r" style="left:1505.20px;top:879.80px" width="8" height="10"><path d="M-0.2,4.4 L3.75,-0.1 L7.7,4.4Z M-0.2,5.1 L3.75,9.6 L7.7,5.1Z" fill="#b0b9c3"/></svg>
<div class="t" style="left:2063.40px;top:879.16px;font-size:12.4px;color:#1a1a1a;font-weight:700;-webkit-text-stroke:0;">Count</div>
<svg class="r" style="left:2103.20px;top:879.80px" width="8" height="10"><path d="M-0.2,4.4 L3.75,-0.1 L7.7,4.4Z M-0.2,5.1 L3.75,9.6 L7.7,5.1Z" fill="#b0b9c3"/></svg>
<div class="r" style="left:47.00px;top:897.00px;width:1337.00px;height:1.20px;background:#d9d9d9;"></div>
<div class="r" style="left:1460.00px;top:897.00px;width:871.00px;height:1.20px;background:#d9d9d9;"></div>
<div class="t" style="left:50.70px;top:905.22px;font-size:12.8px;color:#2e2e2e;">20101</div>
<div class="t" style="left:238.90px;top:905.22px;font-size:12.8px;color:#2e2e2e;">IDS event.</div>
<div class="t" style="left:1065.60px;top:905.22px;font-size:12.8px;color:#2e2e2e;">6</div>
<div class="t" style="left:1218.70px;top:905.22px;font-size:12.8px;color:#2e2e2e;">230</div>
<div class="r" style="left:47.00px;top:923.00px;width:1337.00px;height:1.20px;background:#e2e2e2;"></div>
<div class="t" style="left:50.70px;top:931.22px;font-size:12.8px;color:#2e2e2e;">5710</div>
<div class="t" style="left:238.90px;top:931.22px;font-size:12.8px;color:#2e2e2e;">sshd: Attempt to login using a non-existent user</div>
<div class="t" style="left:1065.60px;top:931.22px;font-size:12.8px;color:#2e2e2e;">5</div>
<div class="t" style="left:1218.70px;top:931.22px;font-size:12.8px;color:#2e2e2e;">199</div>
<div class="r" style="left:47.00px;top:949.00px;width:1337.00px;height:1.20px;background:#e2e2e2;"></div>
<div class="t" style="left:50.70px;top:957.22px;font-size:12.8px;color:#2e2e2e;">20100</div>
<div class="t" style="left:238.90px;top:957.22px;font-size:12.8px;color:#2e2e2e;">First time this IDS alert is generated.</div>
<div class="t" style="left:1065.60px;top:957.22px;font-size:12.8px;color:#2e2e2e;">8</div>
<div class="t" style="left:1218.70px;top:957.22px;font-size:12.8px;color:#2e2e2e;">131</div>
<div class="r" style="left:47.00px;top:975.00px;width:1337.00px;height:1.20px;background:#e2e2e2;"></div>
<div class="t" style="left:50.70px;top:983.22px;font-size:12.8px;color:#2e2e2e;">516</div>
<div class="t" style="left:238.90px;top:983.22px;font-size:12.8px;color:#2e2e2e;">System Audit event.</div>
<div class="t" style="left:1065.60px;top:983.22px;font-size:12.8px;color:#2e2e2e;">3</div>
<div class="t" style="left:1218.70px;top:983.22px;font-size:12.8px;color:#2e2e2e;">56</div>
<div class="r" style="left:47.00px;top:1001.00px;width:1337.00px;height:1.20px;background:#e2e2e2;"></div>
<div class="t" style="left:50.70px;top:1009.22px;font-size:12.8px;color:#2e2e2e;">2501</div>
<div class="t" style="left:238.90px;top:1009.22px;font-size:12.8px;color:#2e2e2e;">syslog: User authentication failure.</div>
<div class="t" style="left:1065.60px;top:1009.22px;font-size:12.8px;color:#2e2e2e;">5</div>
<div class="t" style="left:1218.70px;top:1009.22px;font-size:12.8px;color:#2e2e2e;">38</div>
<div class="r" style="left:47.00px;top:1027.00px;width:1337.00px;height:1.20px;background:#e2e2e2;"></div>
<div class="t" style="left:50.70px;top:1035.22px;font-size:12.8px;color:#2e2e2e;">5718</div>
<div class="t" style="left:238.90px;top:1035.22px;font-size:12.8px;color:#2e2e2e;">sshd: Attempt to login using a denied user.</div>
<div class="t" style="left:1065.60px;top:1035.22px;font-size:12.8px;color:#2e2e2e;">5</div>
<div class="t" style="left:1218.70px;top:1035.22px;font-size:12.8px;color:#2e2e2e;">35</div>
<div class="r" style="left:47.00px;top:1053.00px;width:1337.00px;height:1.20px;background:#e2e2e2;"></div>
<div class="t" style="left:50.70px;top:1061.22px;font-size:12.8px;color:#2e2e2e;">80730</div>
<div class="t" style="left:238.90px;top:1061.22px;font-size:12.8px;color:#2e2e2e;">Auditd: SELinux permission check</div>
<div class="t" style="left:1065.60px;top:1061.22px;font-size:12.8px;color:#2e2e2e;">3</div>
<div class="t" style="left:1218.70px;top:1061.22px;font-size:12.8px;color:#2e2e2e;">28</div>
<div class="r" style="left:47.00px;top:1079.00px;width:1337.00px;height:1.20px;background:#e2e2e2;"></div>
<div class="t" style="left:50.70px;top:1087.22px;font-size:12.8px;color:#2e2e2e;">52507</div>
<div class="t" style="left:238.90px;top:1087.22px;font-size:12.8px;color:#2e2e2e;">ClamAV database update</div>
<div class="t" style="left:1065.60px;top:1087.22px;font-size:12.8px;color:#2e2e2e;">3</div>
<div class="t" style="left:1218.70px;top:1087.22px;font-size:12.8px;color:#2e2e2e;">20</div>
<div class="r" style="left:47.00px;top:1105.00px;width:1337.00px;height:1.20px;background:#e2e2e2;"></div>
<div class="t" style="left:50.70px;top:1113.22px;font-size:12.8px;color:#2e2e2e;">5758</div>
<div class="t" style="left:238.90px;top:1113.22px;font-size:12.8px;color:#2e2e2e;">Maximum authentication attempts exceeded.</div>
<div class="t" style="left:1065.60px;top:1113.22px;font-size:12.8px;color:#2e2e2e;">8</div>
<div class="t" style="left:1218.70px;top:1113.22px;font-size:12.8px;color:#2e2e2e;">7</div>
<div class="r" style="left:47.00px;top:1131.00px;width:1337.00px;height:1.20px;background:#e2e2e2;"></div>
<div class="t" style="left:50.70px;top:1139.22px;font-size:12.8px;color:#2e2e2e;">5702</div>
<div class="t" style="left:238.90px;top:1139.22px;font-size:12.8px;color:#2e2e2e;">sshd: Reverse lookup error (bad ISP or attack).</div>
<div class="t" style="left:1065.60px;top:1139.22px;font-size:12.8px;color:#2e2e2e;">5</div>
<div class="t" style="left:1218.70px;top:1139.22px;font-size:12.8px;color:#2e2e2e;">5</div>
<div class="t" style="left:1464.50px;top:905.22px;font-size:12.8px;color:#2e2e2e;">ids</div>
<div class="t" style="left:2063.40px;top:905.22px;font-size:12.8px;color:#2e2e2e;">361</div>
<div class="r" style="left:1460.00px;top:923.00px;width:871.00px;height:1.20px;background:#e2e2e2;"></div>
<div class="t" style="left:1464.50px;top:931.22px;font-size:12.8px;color:#2e2e2e;">syslog</div>
<div class="t" style="left:2063.40px;top:931.22px;font-size:12.8px;color:#2e2e2e;">293</div>
<div class="r" style="left:1460.00px;top:949.00px;width:871.00px;height:1.20px;background:#e2e2e2;"></div>
<div class="t" style="left:1464.50px;top:957.22px;font-size:12.8px;color:#2e2e2e;">sshd</div>
<div class="t" style="left:2063.40px;top:957.22px;font-size:12.8px;color:#2e2e2e;">251</div>
<div class="r" style="left:1460.00px;top:975.00px;width:871.00px;height:1.20px;background:#e2e2e2;"></div>
<div class="t" style="left:1464.50px;top:983.22px;font-size:12.8px;color:#2e2e2e;">authentication_failed</div>
<div class="t" style="left:2063.40px;top:983.22px;font-size:12.8px;color:#2e2e2e;">244</div>
<div class="r" style="left:1460.00px;top:1001.00px;width:871.00px;height:1.20px;background:#e2e2e2;"></div>
<div class="t" style="left:1464.50px;top:1009.22px;font-size:12.8px;color:#2e2e2e;">invalid_login</div>
<div class="t" style="left:2063.40px;top:1009.22px;font-size:12.8px;color:#2e2e2e;">234</div>
<div class="r" style="left:1460.00px;top:1027.00px;width:871.00px;height:1.20px;background:#e2e2e2;"></div>
<div class="t" style="left:1464.50px;top:1035.22px;font-size:12.8px;color:#2e2e2e;">fts</div>
<div class="t" style="left:2063.40px;top:1035.22px;font-size:12.8px;color:#2e2e2e;">131</div>
<div class="r" style="left:1460.00px;top:1053.00px;width:871.00px;height:1.20px;background:#e2e2e2;"></div>
<div class="t" style="left:1464.50px;top:1061.22px;font-size:12.8px;color:#2e2e2e;">ossec</div>
<div class="t" style="left:2063.40px;top:1061.22px;font-size:12.8px;color:#2e2e2e;">59</div>
<div class="r" style="left:1460.00px;top:1079.00px;width:871.00px;height:1.20px;background:#e2e2e2;"></div>
<div class="t" style="left:1464.50px;top:1087.22px;font-size:12.8px;color:#2e2e2e;">rootcheck</div>
<div class="t" style="left:2063.40px;top:1087.22px;font-size:12.8px;color:#2e2e2e;">56</div>
<div class="r" style="left:1460.00px;top:1105.00px;width:871.00px;height:1.20px;background:#e2e2e2;"></div>
<div class="t" style="left:1464.50px;top:1113.22px;font-size:12.8px;color:#2e2e2e;">access_control</div>
<div class="t" style="left:2063.40px;top:1113.22px;font-size:12.8px;color:#2e2e2e;">38</div>
<div class="r" style="left:1460.00px;top:1131.00px;width:871.00px;height:1.20px;background:#e2e2e2;"></div>
<div class="t" style="left:1464.50px;top:1139.22px;font-size:12.8px;color:#2e2e2e;">audit</div>
<div class="t" style="left:2063.40px;top:1139.22px;font-size:12.8px;color:#2e2e2e;">28</div>
<div class="t" style="left:51.00px;top:1187.05px;font-size:11px;color:#333;-webkit-text-stroke:0;">Export:</div>
<div class="t" style="left:92.60px;top:1186.55px;font-size:11px;color:#3b7dc4;-webkit-text-stroke:0;">Raw</div>
<svg class="r" style="left:118.10px;top:1186.20px" width="12" height="11"><path d="M4.3,0 H6.6 V3.6 H9 L5.45,7.2 L1.9,3.6 H4.3Z" fill="#3b7dc4"/><path d="M0,6.4 H3.2 L5.45,8.3 L7.7,6.4 H10.9 V9.7 H0Z" fill="#3b7dc4"/></svg>
<div class="t" style="left:139.12px;top:1186.55px;font-size:11px;color:#3b7dc4;transform-origin:0 0;transform:scaleX(1.0478)">Formatted</div>
<svg class="r" style="left:195.00px;top:1186.20px" width="12" height="11"><path d="M4.3,0 H6.6 V3.6 H9 L5.45,7.2 L1.9,3.6 H4.3Z" fill="#3b7dc4"/><path d="M0,6.4 H3.2 L5.45,8.3 L7.7,6.4 H10.9 V9.7 H0Z" fill="#3b7dc4"/></svg>
<div class="t" style="left:1464.50px;top:1187.05px;font-size:11px;color:#333;-webkit-text-stroke:0;">Export:</div>
<div class="t" style="left:1506.10px;top:1186.55px;font-size:11px;color:#3b7dc4;-webkit-text-stroke:0;">Raw</div>
<svg class="r" style="left:1531.60px;top:1186.20px" width="12" height="11"><path d="M4.3,0 H6.6 V3.6 H9 L5.45,7.2 L1.9,3.6 H4.3Z" fill="#3b7dc4"/><path d="M0,6.4 H3.2 L5.45,8.3 L7.7,6.4 H10.9 V9.7 H0Z" fill="#3b7dc4"/></svg>
<div class="t" style="left:1552.62px;top:1186.55px;font-size:11px;color:#3b7dc4;transform-origin:0 0;transform:scaleX(1.0478)">Formatted</div>
<svg class="r" style="left:1608.50px;top:1186.20px" width="12" height="11"><path d="M4.3,0 H6.6 V3.6 H9 L5.45,7.2 L1.9,3.6 H4.3Z" fill="#3b7dc4"/><path d="M0,6.4 H3.2 L5.45,8.3 L7.7,6.4 H10.9 V9.7 H0Z" fill="#3b7dc4"/></svg>
<div class="r" style="left:691.10px;top:1208.00px;width:23.70px;height:10.00px;background:#f3f3f3;border-radius:2px 0 0 0"></div>
<div class="r" style="left:717.10px;top:1208.00px;width:23.70px;height:10.00px;background:#f3f3f3;"></div>
<div class="r" style="left:743.10px;top:1208.00px;width:22.40px;height:10.00px;background:#f3f3f3;border-radius:0 2px 0 0"></div>
<div class="r" style="left:1873.10px;top:1208.00px;width:23.70px;height:10.00px;background:#f3f3f3;border-radius:2px 0 0 0"></div>
<div class="r" style="left:1899.10px;top:1208.00px;width:23.70px;height:10.00px;background:#f3f3f3;"></div>
<div class="r" style="left:1925.10px;top:1208.00px;width:22.40px;height:10.00px;background:#f3f3f3;border-radius:0 2px 0 0"></div>
</body></html>
